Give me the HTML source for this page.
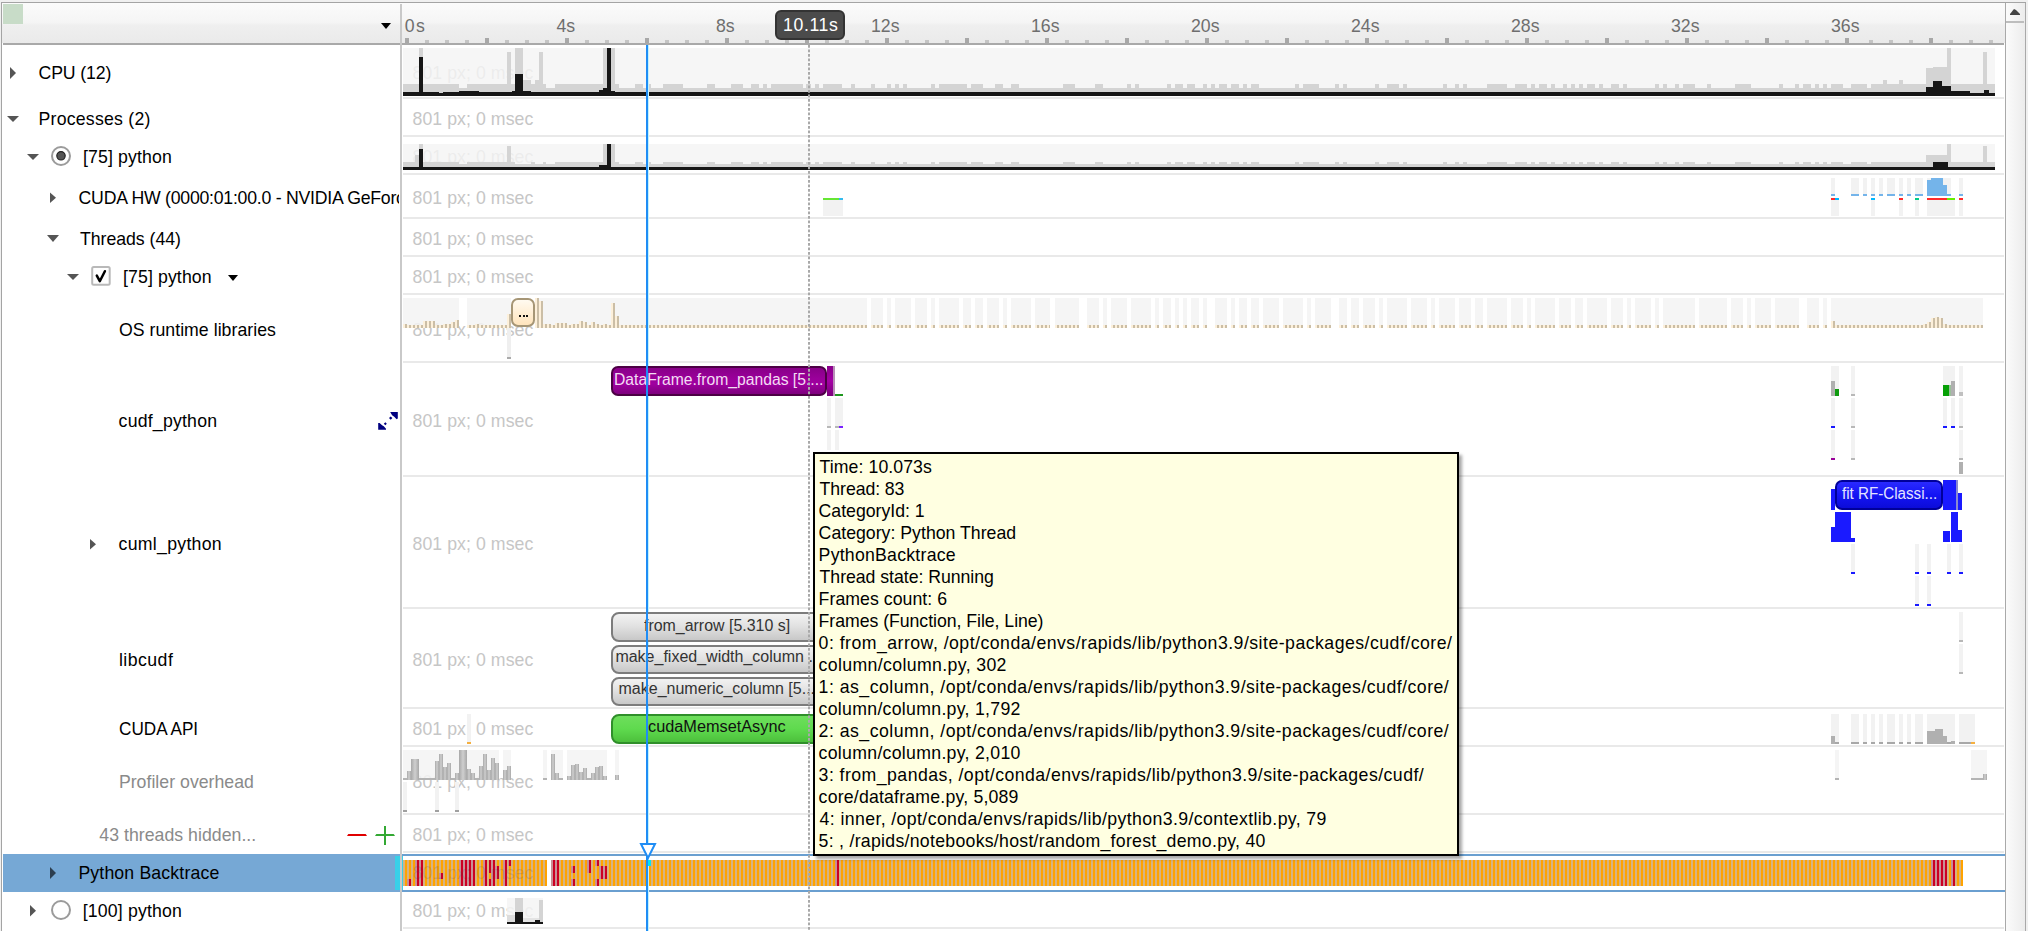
<!DOCTYPE html>
<html><head><meta charset="utf-8"><style>
html,body{margin:0;padding:0;width:2028px;height:931px;overflow:hidden;background:#f0f0f0}
#root{position:relative;width:2028px;height:931px;overflow:hidden;font-family:"Liberation Sans",sans-serif}
svg{position:absolute;left:0;top:0}
svg path,svg circle,svg line{shape-rendering:geometricPrecision}
.t{position:absolute;white-space:nowrap;line-height:normal;font-family:"Liberation Sans",sans-serif}
.center{transform:translateX(-50%)}
</style></head><body><div id="root">
<svg width="2028" height="931" viewBox="0 0 2028 931" shape-rendering="crispEdges">
<rect x="0" y="0" width="2028" height="931" fill="#f0f0f0" />
<rect x="1" y="2" width="2025" height="929" fill="#a4a4a4" />
<rect x="2" y="3" width="2023" height="928" fill="#ffffff" />
<defs><linearGradient id="hdr" x1="0" y1="0" x2="0" y2="1"><stop offset="0" stop-color="#fbfbfb"/><stop offset="0.48" stop-color="#f5f5f5"/><stop offset="0.56" stop-color="#efefef"/><stop offset="1" stop-color="#eaeaea"/></linearGradient><linearGradient id="sb" x1="0" y1="0" x2="1" y2="0"><stop offset="0" stop-color="#fbfbfb"/><stop offset="1" stop-color="#ececec"/></linearGradient></defs>
<rect x="2" y="3" width="2003" height="40" fill="url(#hdr)" />
<rect x="3" y="43" width="2001" height="2" fill="#a9a9a9" />
<rect x="3" y="4" width="20" height="20" fill="#c8dcc8" />
<path d="M381,23 L391,23 L386,29 Z" fill="#000"/>
<rect x="2005" y="3" width="1" height="928" fill="#a9a9a9" />
<rect x="2006" y="3" width="19" height="928" fill="url(#sb)" />
<rect x="2006" y="21" width="18" height="2" fill="#bdbdbd" />
<path d="M2010,15 L2020,15 L2020,14 L2016,10 L2014,9 L2010,14 Z" fill="#444"/>
<rect x="2025" y="3" width="1" height="928" fill="#a9a9a9" />
<rect x="405" y="38" width="4" height="5" fill="#a8a8a8" />
<rect x="425" y="40" width="4" height="3" fill="#c4c4c4" />
<rect x="445" y="40" width="4" height="3" fill="#c4c4c4" />
<rect x="465" y="40" width="4" height="3" fill="#c4c4c4" />
<rect x="485" y="38" width="4" height="5" fill="#a8a8a8" />
<rect x="505" y="40" width="4" height="3" fill="#c4c4c4" />
<rect x="525" y="40" width="4" height="3" fill="#c4c4c4" />
<rect x="545" y="40" width="4" height="3" fill="#c4c4c4" />
<rect x="565" y="38" width="4" height="5" fill="#a8a8a8" />
<rect x="585" y="40" width="4" height="3" fill="#c4c4c4" />
<rect x="605" y="40" width="4" height="3" fill="#c4c4c4" />
<rect x="625" y="40" width="4" height="3" fill="#c4c4c4" />
<rect x="645" y="38" width="4" height="5" fill="#a8a8a8" />
<rect x="665" y="40" width="4" height="3" fill="#c4c4c4" />
<rect x="685" y="40" width="4" height="3" fill="#c4c4c4" />
<rect x="705" y="40" width="4" height="3" fill="#c4c4c4" />
<rect x="725" y="38" width="4" height="5" fill="#a8a8a8" />
<rect x="745" y="40" width="4" height="3" fill="#c4c4c4" />
<rect x="765" y="40" width="4" height="3" fill="#c4c4c4" />
<rect x="785" y="40" width="4" height="3" fill="#c4c4c4" />
<rect x="805" y="38" width="4" height="5" fill="#a8a8a8" />
<rect x="825" y="40" width="4" height="3" fill="#c4c4c4" />
<rect x="845" y="40" width="4" height="3" fill="#c4c4c4" />
<rect x="865" y="40" width="4" height="3" fill="#c4c4c4" />
<rect x="885" y="38" width="4" height="5" fill="#a8a8a8" />
<rect x="905" y="40" width="4" height="3" fill="#c4c4c4" />
<rect x="925" y="40" width="4" height="3" fill="#c4c4c4" />
<rect x="945" y="40" width="4" height="3" fill="#c4c4c4" />
<rect x="965" y="38" width="4" height="5" fill="#a8a8a8" />
<rect x="985" y="40" width="4" height="3" fill="#c4c4c4" />
<rect x="1005" y="40" width="4" height="3" fill="#c4c4c4" />
<rect x="1025" y="40" width="4" height="3" fill="#c4c4c4" />
<rect x="1045" y="38" width="4" height="5" fill="#a8a8a8" />
<rect x="1065" y="40" width="4" height="3" fill="#c4c4c4" />
<rect x="1085" y="40" width="4" height="3" fill="#c4c4c4" />
<rect x="1105" y="40" width="4" height="3" fill="#c4c4c4" />
<rect x="1125" y="38" width="4" height="5" fill="#a8a8a8" />
<rect x="1145" y="40" width="4" height="3" fill="#c4c4c4" />
<rect x="1165" y="40" width="4" height="3" fill="#c4c4c4" />
<rect x="1185" y="40" width="4" height="3" fill="#c4c4c4" />
<rect x="1205" y="38" width="4" height="5" fill="#a8a8a8" />
<rect x="1225" y="40" width="4" height="3" fill="#c4c4c4" />
<rect x="1245" y="40" width="4" height="3" fill="#c4c4c4" />
<rect x="1265" y="40" width="4" height="3" fill="#c4c4c4" />
<rect x="1285" y="38" width="4" height="5" fill="#a8a8a8" />
<rect x="1305" y="40" width="4" height="3" fill="#c4c4c4" />
<rect x="1325" y="40" width="4" height="3" fill="#c4c4c4" />
<rect x="1345" y="40" width="4" height="3" fill="#c4c4c4" />
<rect x="1365" y="38" width="4" height="5" fill="#a8a8a8" />
<rect x="1385" y="40" width="4" height="3" fill="#c4c4c4" />
<rect x="1405" y="40" width="4" height="3" fill="#c4c4c4" />
<rect x="1425" y="40" width="4" height="3" fill="#c4c4c4" />
<rect x="1445" y="38" width="4" height="5" fill="#a8a8a8" />
<rect x="1465" y="40" width="4" height="3" fill="#c4c4c4" />
<rect x="1485" y="40" width="4" height="3" fill="#c4c4c4" />
<rect x="1505" y="40" width="4" height="3" fill="#c4c4c4" />
<rect x="1525" y="38" width="4" height="5" fill="#a8a8a8" />
<rect x="1545" y="40" width="4" height="3" fill="#c4c4c4" />
<rect x="1565" y="40" width="4" height="3" fill="#c4c4c4" />
<rect x="1585" y="40" width="4" height="3" fill="#c4c4c4" />
<rect x="1605" y="38" width="4" height="5" fill="#a8a8a8" />
<rect x="1625" y="40" width="4" height="3" fill="#c4c4c4" />
<rect x="1645" y="40" width="4" height="3" fill="#c4c4c4" />
<rect x="1665" y="40" width="4" height="3" fill="#c4c4c4" />
<rect x="1685" y="38" width="4" height="5" fill="#a8a8a8" />
<rect x="1705" y="40" width="4" height="3" fill="#c4c4c4" />
<rect x="1725" y="40" width="4" height="3" fill="#c4c4c4" />
<rect x="1745" y="40" width="4" height="3" fill="#c4c4c4" />
<rect x="1765" y="38" width="4" height="5" fill="#a8a8a8" />
<rect x="1785" y="40" width="4" height="3" fill="#c4c4c4" />
<rect x="1805" y="40" width="4" height="3" fill="#c4c4c4" />
<rect x="1825" y="40" width="4" height="3" fill="#c4c4c4" />
<rect x="1845" y="38" width="4" height="5" fill="#a8a8a8" />
<rect x="1869" y="40" width="4" height="3" fill="#c4c4c4" />
<rect x="1889" y="40" width="4" height="3" fill="#c4c4c4" />
<rect x="1909" y="40" width="4" height="3" fill="#c4c4c4" />
<rect x="1929" y="38" width="4" height="5" fill="#a8a8a8" />
<rect x="1949" y="40" width="4" height="3" fill="#c4c4c4" />
<rect x="1969" y="40" width="4" height="3" fill="#c4c4c4" />
<rect x="1989" y="40" width="4" height="3" fill="#c4c4c4" />
<rect x="400" y="4" width="2" height="927" fill="#c9c9c9" />
<rect x="403" y="97" width="1601" height="2" fill="#e9e9e9" />
<rect x="403" y="135" width="1601" height="2" fill="#e9e9e9" />
<rect x="403" y="173" width="1601" height="2" fill="#e9e9e9" />
<rect x="403" y="217" width="1601" height="2" fill="#e9e9e9" />
<rect x="403" y="255" width="1601" height="2" fill="#e9e9e9" />
<rect x="403" y="293" width="1601" height="2" fill="#e9e9e9" />
<rect x="403" y="361" width="1601" height="2" fill="#e9e9e9" />
<rect x="403" y="475" width="1601" height="2" fill="#e9e9e9" />
<rect x="403" y="607" width="1601" height="2" fill="#e9e9e9" />
<rect x="403" y="707" width="1601" height="2" fill="#e9e9e9" />
<rect x="403" y="745" width="1601" height="2" fill="#e9e9e9" />
<rect x="403" y="813" width="1601" height="2" fill="#e9e9e9" />
<rect x="403" y="851" width="1601" height="2" fill="#e9e9e9" />
<rect x="403" y="927" width="1601" height="2" fill="#e9e9e9" />
<path d="M10,67 L16,73.0 L10,79 Z" fill="#555"/>
<path d="M7,116 L19,116 L13.0,122 Z" fill="#555"/>
<path d="M27,154 L39,154 L33.0,160 Z" fill="#555"/>
<circle cx="61" cy="156" r="9" fill="#fff" stroke="#9b9b9b" stroke-width="2"/>
<circle cx="61" cy="155.8" r="4.2" fill="#555" stroke="#222" stroke-width="1.2"/>
<path d="M50,192.5 L56,197.75 L50,203 Z" fill="#555"/>
<path d="M47,235 L59,235 L53.0,242 Z" fill="#555"/>
<path d="M67,274 L79,274 L73.0,280 Z" fill="#555"/>
<rect x="92.2" y="267.1" width="17.5" height="17.7" rx="1.5" fill="#fff" stroke="#b9b9b9" stroke-width="2" shape-rendering="geometricPrecision"/>
<path d="M96.8,275.6 L99.8,281.2 L104.9,271.2" fill="none" stroke="#000" stroke-width="2.5" stroke-linecap="round" stroke-linejoin="round" shape-rendering="geometricPrecision"/>
<path d="M228,275 L238,275 L233.0,281 Z" fill="#000"/>
<g fill="#000080"><path d="M390.2,412 L397.8,412 L397.8,418.6 L396.6,419.2 L394.2,416.8 L392.1,415.3 Z"/><path d="M390.7,416.4 L392.4,418 L390.7,419.7 L389,418 Z"/><path d="M378.2,423 L379.6,422.9 L382.1,425.2 L383.8,426.3 L386,428.7 L386,429.7 L378.2,429.7 Z"/><path d="M385.3,422.3 L386.8,423.8 L385.3,425.3 L383.8,423.8 Z"/></g>
<path d="M90,539 L96,544.25 L90,549.5 Z" fill="#555"/>
<path d="M347,836 L348.3,834 L365.7,834 L367,836 Z" fill="#e00000"/>
<path d="M375,836 L376.3,834 L393.7,834 L395,836 Z" fill="#33a833"/>
<rect x="384" y="826" width="2" height="19" fill="#33a833" />
<rect x="3" y="854" width="397" height="38" fill="#76a8d5" />
<rect x="395" y="856" width="5" height="34" fill="#38d0e8" />
<path d="M50,867 L56,873.0 L50,879 Z" fill="#2c3e50"/>
<path d="M30,905 L36,910.75 L30,916.5 Z" fill="#555"/>
<circle cx="61" cy="910" r="9" fill="#fff" stroke="#9b9b9b" stroke-width="2"/>
<rect x="402" y="854" width="1603" height="2" fill="#6a9fd0" />
<rect x="402" y="890" width="1603" height="2" fill="#6a9fd0" />
<rect x="402" y="856" width="1" height="34" fill="#38d0e8" />
<defs><pattern id="stripe" x="1" y="0" width="4" height="40" patternUnits="userSpaceOnUse"><rect x="0" y="0" width="2" height="40" fill="#ffa300"/><rect x="2" y="0" width="2" height="40" fill="#d6b382"/></pattern><pattern id="rstripe" x="1" y="0" width="4" height="40" patternUnits="userSpaceOnUse"><rect x="0" y="0" width="2" height="40" fill="#cc0022"/><rect x="2" y="0" width="2" height="40" fill="#c89096"/></pattern></defs>
<rect x="403" y="860" width="144" height="26" fill="url(#stripe)" />
<rect x="551" y="860" width="1412" height="26" fill="url(#stripe)" />
<rect x="407" y="879" width="4" height="7" fill="url(#rstripe)" />
<rect x="415" y="860" width="8" height="26" fill="url(#rstripe)" />
<rect x="439" y="873" width="4" height="6" fill="url(#rstripe)" />
<rect x="459" y="860" width="16" height="26" fill="url(#rstripe)" />
<rect x="483" y="860" width="4" height="26" fill="url(#rstripe)" />
<rect x="489" y="860" width="6" height="13" fill="url(#rstripe)" />
<rect x="489" y="879" width="6" height="7" fill="url(#rstripe)" />
<rect x="491" y="866" width="8" height="13" fill="url(#rstripe)" />
<rect x="503" y="860" width="4" height="26" fill="url(#rstripe)" />
<rect x="508" y="860" width="3" height="6" fill="url(#rstripe)" />
<rect x="551" y="860" width="8" height="26" fill="url(#rstripe)" />
<rect x="571" y="866" width="4" height="7" fill="url(#rstripe)" />
<rect x="571" y="879" width="4" height="7" fill="url(#rstripe)" />
<rect x="587" y="860" width="4" height="13" fill="url(#rstripe)" />
<rect x="595" y="860" width="4" height="6" fill="url(#rstripe)" />
<rect x="595" y="879" width="4" height="7" fill="url(#rstripe)" />
<rect x="599" y="866" width="8" height="13" fill="url(#rstripe)" />
<rect x="835" y="860" width="4" height="26" fill="url(#rstripe)" />
<rect x="1931" y="860" width="16" height="26" fill="url(#rstripe)" />
<rect x="1951" y="860" width="4" height="26" fill="url(#rstripe)" />
</svg>
<div class="t" style="left:404.70px;top:16.00px;font-size:17.7px;color:#6e6e6e;letter-spacing:1.363px;">0s</div>
<div class="t" style="left:556.50px;top:16.00px;font-size:17.7px;color:#6e6e6e;letter-spacing:0.000px;">4s</div>
<div class="t" style="left:716.00px;top:16.00px;font-size:17.7px;color:#6e6e6e;letter-spacing:0.000px;">8s</div>
<div class="t" style="left:871.00px;top:16.00px;font-size:17.7px;color:#6e6e6e;letter-spacing:0.000px;">12s</div>
<div class="t" style="left:1031.00px;top:16.00px;font-size:17.7px;color:#6e6e6e;letter-spacing:0.000px;">16s</div>
<div class="t" style="left:1191.00px;top:16.00px;font-size:17.7px;color:#6e6e6e;letter-spacing:0.000px;">20s</div>
<div class="t" style="left:1351.00px;top:16.00px;font-size:17.7px;color:#6e6e6e;letter-spacing:0.000px;">24s</div>
<div class="t" style="left:1511.00px;top:16.00px;font-size:17.7px;color:#6e6e6e;letter-spacing:0.000px;">28s</div>
<div class="t" style="left:1671.00px;top:16.00px;font-size:17.7px;color:#6e6e6e;letter-spacing:0.000px;">32s</div>
<div class="t" style="left:1831.00px;top:16.00px;font-size:17.7px;color:#6e6e6e;letter-spacing:0.000px;">36s</div>
<div class="t" style="left:38.50px;top:62.60px;font-size:17.7px;color:#000;letter-spacing:-0.117px;">CPU (12)</div>
<div class="t" style="left:38.50px;top:108.60px;font-size:17.7px;color:#000;letter-spacing:0.232px;">Processes (2)</div>
<div class="t" style="left:83.00px;top:147.00px;font-size:17.7px;color:#000;letter-spacing:0.131px;">[75] python</div>
<div class="t" style="left:78.60px;top:187.70px;font-size:17.7px;color:#000;letter-spacing:-0.246px;clip-path:inset(-5px calc(100% - 320.4px) -5px -5px)">CUDA HW (0000:01:00.0 - NVIDIA GeForce RTX 3090)</div>
<div class="t" style="left:80.00px;top:229.00px;font-size:17.7px;color:#000;letter-spacing:-0.033px;">Threads (44)</div>
<div class="t" style="left:123.00px;top:266.70px;font-size:17.7px;color:#000;letter-spacing:0.111px;">[75] python</div>
<div class="t" style="left:119.00px;top:319.80px;font-size:17.7px;color:#000;letter-spacing:0.029px;">OS runtime libraries</div>
<div class="t" style="left:118.60px;top:410.60px;font-size:17.7px;color:#000;letter-spacing:0.206px;">cudf_python</div>
<div class="t" style="left:118.60px;top:533.90px;font-size:17.7px;color:#000;letter-spacing:0.275px;">cuml_python</div>
<div class="t" style="left:118.90px;top:649.80px;font-size:17.7px;color:#000;letter-spacing:0.464px;">libcudf</div>
<div class="t" style="left:118.90px;top:718.50px;font-size:17.7px;color:#000;letter-spacing:0.000px;transform:scaleX(0.9697);transform-origin:0 0;">CUDA API</div>
<div class="t" style="left:118.90px;top:771.80px;font-size:17.7px;color:#8a8a8a;letter-spacing:0.021px;">Profiler overhead</div>
<div class="t" style="left:99.30px;top:824.70px;font-size:17.7px;color:#8a8a8a;letter-spacing:0.029px;">43 threads hidden...</div>
<div class="t" style="left:78.40px;top:862.50px;font-size:17.7px;color:#000;letter-spacing:0.148px;">Python Backtrace</div>
<div class="t" style="left:82.80px;top:900.70px;font-size:17.7px;color:#000;letter-spacing:0.153px;">[100] python</div>
<div class="t" style="left:412.50px;top:62.80px;font-size:17.7px;color:#c6c6c6;letter-spacing:0.069px;">801 px; 0 msec</div>
<div class="t" style="left:412.50px;top:109.00px;font-size:17.7px;color:#c6c6c6;letter-spacing:0.069px;">801 px; 0 msec</div>
<div class="t" style="left:412.50px;top:147.00px;font-size:17.7px;color:#c6c6c6;letter-spacing:0.069px;">801 px; 0 msec</div>
<div class="t" style="left:412.50px;top:187.80px;font-size:17.7px;color:#c6c6c6;letter-spacing:0.069px;">801 px; 0 msec</div>
<div class="t" style="left:412.50px;top:229.00px;font-size:17.7px;color:#c6c6c6;letter-spacing:0.069px;">801 px; 0 msec</div>
<div class="t" style="left:412.50px;top:266.70px;font-size:17.7px;color:#c6c6c6;letter-spacing:0.069px;">801 px; 0 msec</div>
<div class="t" style="left:412.50px;top:320.00px;font-size:17.7px;color:#c6c6c6;letter-spacing:0.069px;">801 px; 0 msec</div>
<div class="t" style="left:412.50px;top:410.50px;font-size:17.7px;color:#c6c6c6;letter-spacing:0.069px;">801 px; 0 msec</div>
<div class="t" style="left:412.50px;top:533.90px;font-size:17.7px;color:#c6c6c6;letter-spacing:0.069px;">801 px; 0 msec</div>
<div class="t" style="left:412.50px;top:649.50px;font-size:17.7px;color:#c6c6c6;letter-spacing:0.069px;">801 px; 0 msec</div>
<div class="t" style="left:412.50px;top:718.60px;font-size:17.7px;color:#c6c6c6;letter-spacing:0.069px;">801 px; 0 msec</div>
<div class="t" style="left:412.50px;top:771.50px;font-size:17.7px;color:#c6c6c6;letter-spacing:0.069px;">801 px; 0 msec</div>
<div class="t" style="left:412.50px;top:824.70px;font-size:17.7px;color:#c6c6c6;letter-spacing:0.069px;">801 px; 0 msec</div>
<div class="t" style="left:412.50px;top:900.70px;font-size:17.7px;color:#c6c6c6;letter-spacing:0.069px;">801 px; 0 msec</div>
<svg width="2028" height="931" viewBox="0 0 2028 931" shape-rendering="crispEdges">
<rect x="403" y="48" width="1592" height="48" fill="#f4f4f4" fill-opacity="0.82"/>
<rect x="403" y="84" width="16" height="12" fill="#d4d4d4" />
<rect x="419" y="48" width="4" height="48" fill="#d4d4d4" />
<rect x="423" y="84" width="36" height="12" fill="#d4d4d4" />
<rect x="459" y="88" width="8" height="8" fill="#d4d4d4" />
<rect x="467" y="84" width="40" height="12" fill="#d4d4d4" />
<rect x="507" y="52" width="4" height="44" fill="#d4d4d4" />
<rect x="511" y="84" width="4" height="12" fill="#d4d4d4" />
<rect x="515" y="48" width="8" height="48" fill="#d4d4d4" />
<rect x="523" y="80" width="8" height="16" fill="#d4d4d4" />
<rect x="531" y="84" width="4" height="12" fill="#d4d4d4" />
<rect x="535" y="80" width="4" height="16" fill="#d4d4d4" />
<rect x="539" y="52" width="4" height="44" fill="#d4d4d4" />
<rect x="543" y="84" width="3" height="12" fill="#d4d4d4" />
<rect x="546" y="88" width="9" height="8" fill="#d4d4d4" />
<rect x="555" y="84" width="48" height="12" fill="#d4d4d4" />
<rect x="603" y="48" width="12" height="48" fill="#d4d4d4" />
<rect x="615" y="84" width="4" height="12" fill="#d4d4d4" />
<rect x="619" y="88" width="16" height="8" fill="#d4d4d4" />
<rect x="635" y="84" width="8" height="12" fill="#d4d4d4" />
<rect x="643" y="88" width="3" height="8" fill="#d4d4d4" />
<rect x="646" y="84" width="5" height="12" fill="#d4d4d4" />
<rect x="651" y="88" width="12" height="8" fill="#d4d4d4" />
<rect x="663" y="84" width="20" height="12" fill="#d4d4d4" />
<rect x="683" y="88" width="24" height="8" fill="#d4d4d4" />
<rect x="707" y="84" width="8" height="12" fill="#d4d4d4" />
<rect x="715" y="88" width="16" height="8" fill="#d4d4d4" />
<rect x="731" y="84" width="12" height="12" fill="#d4d4d4" />
<rect x="743" y="88" width="8" height="8" fill="#d4d4d4" />
<rect x="751" y="84" width="8" height="12" fill="#d4d4d4" />
<rect x="759" y="88" width="4" height="8" fill="#d4d4d4" />
<rect x="763" y="84" width="4" height="12" fill="#d4d4d4" />
<rect x="767" y="88" width="4" height="8" fill="#d4d4d4" />
<rect x="771" y="84" width="32" height="12" fill="#d4d4d4" />
<rect x="803" y="88" width="3" height="8" fill="#d4d4d4" />
<rect x="806" y="84" width="5" height="12" fill="#d4d4d4" />
<rect x="811" y="88" width="4" height="8" fill="#d4d4d4" />
<rect x="815" y="84" width="4" height="12" fill="#d4d4d4" />
<rect x="819" y="88" width="4" height="8" fill="#d4d4d4" />
<rect x="823" y="84" width="19" height="12" fill="#d4d4d4" />
<rect x="842" y="88" width="9" height="8" fill="#d4d4d4" />
<rect x="851" y="84" width="4" height="12" fill="#d4d4d4" />
<rect x="855" y="88" width="16" height="8" fill="#d4d4d4" />
<rect x="871" y="84" width="4" height="12" fill="#d4d4d4" />
<rect x="875" y="88" width="12" height="8" fill="#d4d4d4" />
<rect x="887" y="84" width="4" height="12" fill="#d4d4d4" />
<rect x="891" y="88" width="4" height="8" fill="#d4d4d4" />
<rect x="895" y="84" width="4" height="12" fill="#d4d4d4" />
<rect x="899" y="88" width="4" height="8" fill="#d4d4d4" />
<rect x="903" y="84" width="4" height="12" fill="#d4d4d4" />
<rect x="907" y="88" width="24" height="8" fill="#d4d4d4" />
<rect x="931" y="84" width="4" height="12" fill="#d4d4d4" />
<rect x="935" y="88" width="4" height="8" fill="#d4d4d4" />
<rect x="939" y="84" width="28" height="12" fill="#d4d4d4" />
<rect x="967" y="88" width="4" height="8" fill="#d4d4d4" />
<rect x="971" y="84" width="12" height="12" fill="#d4d4d4" />
<rect x="983" y="88" width="12" height="8" fill="#d4d4d4" />
<rect x="995" y="84" width="8" height="12" fill="#d4d4d4" />
<rect x="1003" y="88" width="8" height="8" fill="#d4d4d4" />
<rect x="1011" y="84" width="8" height="12" fill="#d4d4d4" />
<rect x="1019" y="88" width="44" height="8" fill="#d4d4d4" />
<rect x="1063" y="84" width="12" height="12" fill="#d4d4d4" />
<rect x="1075" y="88" width="20" height="8" fill="#d4d4d4" />
<rect x="1095" y="84" width="8" height="12" fill="#d4d4d4" />
<rect x="1103" y="88" width="24" height="8" fill="#d4d4d4" />
<rect x="1127" y="84" width="4" height="12" fill="#d4d4d4" />
<rect x="1131" y="88" width="4" height="8" fill="#d4d4d4" />
<rect x="1135" y="84" width="4" height="12" fill="#d4d4d4" />
<rect x="1139" y="88" width="28" height="8" fill="#d4d4d4" />
<rect x="1167" y="84" width="4" height="12" fill="#d4d4d4" />
<rect x="1171" y="88" width="4" height="8" fill="#d4d4d4" />
<rect x="1175" y="84" width="8" height="12" fill="#d4d4d4" />
<rect x="1183" y="88" width="4" height="8" fill="#d4d4d4" />
<rect x="1187" y="84" width="8" height="12" fill="#d4d4d4" />
<rect x="1195" y="88" width="8" height="8" fill="#d4d4d4" />
<rect x="1203" y="84" width="4" height="12" fill="#d4d4d4" />
<rect x="1207" y="88" width="4" height="8" fill="#d4d4d4" />
<rect x="1211" y="84" width="4" height="12" fill="#d4d4d4" />
<rect x="1215" y="88" width="4" height="8" fill="#d4d4d4" />
<rect x="1219" y="84" width="8" height="12" fill="#d4d4d4" />
<rect x="1227" y="88" width="4" height="8" fill="#d4d4d4" />
<rect x="1231" y="84" width="8" height="12" fill="#d4d4d4" />
<rect x="1239" y="88" width="4" height="8" fill="#d4d4d4" />
<rect x="1243" y="84" width="4" height="12" fill="#d4d4d4" />
<rect x="1247" y="88" width="4" height="8" fill="#d4d4d4" />
<rect x="1251" y="84" width="8" height="12" fill="#d4d4d4" />
<rect x="1259" y="88" width="36" height="8" fill="#d4d4d4" />
<rect x="1295" y="84" width="4" height="12" fill="#d4d4d4" />
<rect x="1299" y="88" width="4" height="8" fill="#d4d4d4" />
<rect x="1303" y="84" width="16" height="12" fill="#d4d4d4" />
<rect x="1319" y="88" width="16" height="8" fill="#d4d4d4" />
<rect x="1335" y="84" width="4" height="12" fill="#d4d4d4" />
<rect x="1339" y="88" width="4" height="8" fill="#d4d4d4" />
<rect x="1343" y="84" width="4" height="12" fill="#d4d4d4" />
<rect x="1347" y="88" width="28" height="8" fill="#d4d4d4" />
<rect x="1375" y="84" width="4" height="12" fill="#d4d4d4" />
<rect x="1379" y="88" width="8" height="8" fill="#d4d4d4" />
<rect x="1387" y="84" width="12" height="12" fill="#d4d4d4" />
<rect x="1399" y="88" width="4" height="8" fill="#d4d4d4" />
<rect x="1403" y="84" width="4" height="12" fill="#d4d4d4" />
<rect x="1407" y="88" width="36" height="8" fill="#d4d4d4" />
<rect x="1443" y="84" width="4" height="12" fill="#d4d4d4" />
<rect x="1447" y="88" width="8" height="8" fill="#d4d4d4" />
<rect x="1455" y="84" width="4" height="12" fill="#d4d4d4" />
<rect x="1459" y="88" width="4" height="8" fill="#d4d4d4" />
<rect x="1463" y="84" width="4" height="12" fill="#d4d4d4" />
<rect x="1467" y="88" width="20" height="8" fill="#d4d4d4" />
<rect x="1487" y="84" width="20" height="12" fill="#d4d4d4" />
<rect x="1507" y="88" width="8" height="8" fill="#d4d4d4" />
<rect x="1515" y="84" width="12" height="12" fill="#d4d4d4" />
<rect x="1527" y="88" width="4" height="8" fill="#d4d4d4" />
<rect x="1531" y="84" width="4" height="12" fill="#d4d4d4" />
<rect x="1535" y="88" width="4" height="8" fill="#d4d4d4" />
<rect x="1539" y="84" width="8" height="12" fill="#d4d4d4" />
<rect x="1547" y="88" width="4" height="8" fill="#d4d4d4" />
<rect x="1551" y="84" width="4" height="12" fill="#d4d4d4" />
<rect x="1555" y="88" width="8" height="8" fill="#d4d4d4" />
<rect x="1563" y="84" width="4" height="12" fill="#d4d4d4" />
<rect x="1567" y="88" width="4" height="8" fill="#d4d4d4" />
<rect x="1571" y="84" width="4" height="12" fill="#d4d4d4" />
<rect x="1575" y="88" width="4" height="8" fill="#d4d4d4" />
<rect x="1579" y="84" width="4" height="12" fill="#d4d4d4" />
<rect x="1583" y="88" width="4" height="8" fill="#d4d4d4" />
<rect x="1587" y="84" width="8" height="12" fill="#d4d4d4" />
<rect x="1595" y="88" width="4" height="8" fill="#d4d4d4" />
<rect x="1599" y="84" width="4" height="12" fill="#d4d4d4" />
<rect x="1603" y="88" width="8" height="8" fill="#d4d4d4" />
<rect x="1611" y="84" width="8" height="12" fill="#d4d4d4" />
<rect x="1619" y="88" width="4" height="8" fill="#d4d4d4" />
<rect x="1623" y="84" width="4" height="12" fill="#d4d4d4" />
<rect x="1627" y="88" width="28" height="8" fill="#d4d4d4" />
<rect x="1655" y="84" width="4" height="12" fill="#d4d4d4" />
<rect x="1659" y="88" width="4" height="8" fill="#d4d4d4" />
<rect x="1663" y="84" width="4" height="12" fill="#d4d4d4" />
<rect x="1667" y="88" width="8" height="8" fill="#d4d4d4" />
<rect x="1675" y="84" width="4" height="12" fill="#d4d4d4" />
<rect x="1679" y="88" width="4" height="8" fill="#d4d4d4" />
<rect x="1683" y="84" width="12" height="12" fill="#d4d4d4" />
<rect x="1695" y="88" width="12" height="8" fill="#d4d4d4" />
<rect x="1707" y="84" width="4" height="12" fill="#d4d4d4" />
<rect x="1711" y="88" width="24" height="8" fill="#d4d4d4" />
<rect x="1735" y="84" width="16" height="12" fill="#d4d4d4" />
<rect x="1751" y="88" width="28" height="8" fill="#d4d4d4" />
<rect x="1779" y="84" width="4" height="12" fill="#d4d4d4" />
<rect x="1783" y="88" width="12" height="8" fill="#d4d4d4" />
<rect x="1795" y="84" width="4" height="12" fill="#d4d4d4" />
<rect x="1799" y="88" width="4" height="8" fill="#d4d4d4" />
<rect x="1803" y="84" width="8" height="12" fill="#d4d4d4" />
<rect x="1811" y="88" width="4" height="8" fill="#d4d4d4" />
<rect x="1815" y="84" width="4" height="12" fill="#d4d4d4" />
<rect x="1819" y="88" width="4" height="8" fill="#d4d4d4" />
<rect x="1823" y="84" width="4" height="12" fill="#d4d4d4" />
<rect x="1827" y="88" width="4" height="8" fill="#d4d4d4" />
<rect x="1831" y="84" width="12" height="12" fill="#d4d4d4" />
<rect x="1843" y="88" width="8" height="8" fill="#d4d4d4" />
<rect x="1851" y="84" width="16" height="12" fill="#d4d4d4" />
<rect x="1867" y="88" width="4" height="8" fill="#d4d4d4" />
<rect x="1871" y="84" width="12" height="12" fill="#d4d4d4" />
<rect x="1883" y="80" width="4" height="16" fill="#d4d4d4" />
<rect x="1887" y="84" width="12" height="12" fill="#d4d4d4" />
<rect x="1899" y="80" width="4" height="16" fill="#d4d4d4" />
<rect x="1903" y="84" width="23" height="12" fill="#d4d4d4" />
<rect x="1926" y="68" width="7" height="28" fill="#d4d4d4" />
<rect x="1933" y="67" width="14" height="29" fill="#d4d4d4" />
<rect x="1947" y="48" width="4" height="48" fill="#d4d4d4" />
<rect x="1951" y="84" width="32" height="12" fill="#d4d4d4" />
<rect x="1983" y="52" width="4" height="44" fill="#d4d4d4" />
<rect x="1987" y="84" width="8" height="12" fill="#d4d4d4" />
<rect x="403" y="92" width="16" height="4" fill="#161616" />
<rect x="419" y="57" width="4" height="39" fill="#161616" />
<rect x="423" y="92" width="16" height="4" fill="#161616" />
<rect x="439" y="93" width="4" height="3" fill="#161616" />
<rect x="443" y="92" width="16" height="4" fill="#161616" />
<rect x="459" y="91" width="20" height="5" fill="#161616" />
<rect x="479" y="92" width="33" height="4" fill="#161616" />
<rect x="512" y="91" width="3" height="5" fill="#161616" />
<rect x="515" y="74" width="8" height="22" fill="#161616" />
<rect x="523" y="91" width="8" height="5" fill="#161616" />
<rect x="531" y="92" width="68" height="4" fill="#161616" />
<rect x="599" y="90" width="4" height="6" fill="#161616" />
<rect x="603" y="88" width="4" height="8" fill="#161616" />
<rect x="607" y="48" width="4" height="48" fill="#161616" />
<rect x="611" y="91" width="4" height="5" fill="#161616" />
<rect x="615" y="92" width="1311" height="4" fill="#161616" />
<rect x="1926" y="87" width="7" height="9" fill="#161616" />
<rect x="1933" y="81" width="9" height="15" fill="#161616" />
<rect x="1942" y="86" width="9" height="10" fill="#161616" />
<rect x="1951" y="91" width="19" height="5" fill="#161616" />
<rect x="1970" y="93" width="14" height="3" fill="#161616" />
<rect x="1984" y="90" width="5" height="6" fill="#161616" />
<rect x="1989" y="93" width="6" height="3" fill="#161616" />
<rect x="403" y="144" width="1592" height="26" fill="#f4f4f4" fill-opacity="0.82"/>
<rect x="403" y="162" width="12" height="8" fill="#d4d4d4" />
<rect x="415" y="155" width="4" height="15" fill="#d4d4d4" />
<rect x="419" y="144" width="4" height="26" fill="#d4d4d4" />
<rect x="423" y="162" width="36" height="8" fill="#d4d4d4" />
<rect x="459" y="164" width="8" height="6" fill="#d4d4d4" />
<rect x="467" y="162" width="40" height="8" fill="#d4d4d4" />
<rect x="507" y="146" width="4" height="24" fill="#d4d4d4" />
<rect x="511" y="162" width="4" height="8" fill="#d4d4d4" />
<rect x="515" y="164" width="16" height="6" fill="#d4d4d4" />
<rect x="531" y="162" width="4" height="8" fill="#d4d4d4" />
<rect x="535" y="164" width="8" height="6" fill="#d4d4d4" />
<rect x="543" y="162" width="3" height="8" fill="#d4d4d4" />
<rect x="546" y="164" width="9" height="6" fill="#d4d4d4" />
<rect x="555" y="162" width="48" height="8" fill="#d4d4d4" />
<rect x="603" y="144" width="12" height="26" fill="#d4d4d4" />
<rect x="615" y="162" width="4" height="8" fill="#d4d4d4" />
<rect x="619" y="164" width="16" height="6" fill="#d4d4d4" />
<rect x="635" y="162" width="8" height="8" fill="#d4d4d4" />
<rect x="643" y="164" width="3" height="6" fill="#d4d4d4" />
<rect x="646" y="162" width="5" height="8" fill="#d4d4d4" />
<rect x="651" y="164" width="12" height="6" fill="#d4d4d4" />
<rect x="663" y="162" width="20" height="8" fill="#d4d4d4" />
<rect x="683" y="164" width="24" height="6" fill="#d4d4d4" />
<rect x="707" y="162" width="8" height="8" fill="#d4d4d4" />
<rect x="715" y="164" width="16" height="6" fill="#d4d4d4" />
<rect x="731" y="162" width="12" height="8" fill="#d4d4d4" />
<rect x="743" y="164" width="8" height="6" fill="#d4d4d4" />
<rect x="751" y="162" width="8" height="8" fill="#d4d4d4" />
<rect x="759" y="164" width="4" height="6" fill="#d4d4d4" />
<rect x="763" y="162" width="4" height="8" fill="#d4d4d4" />
<rect x="767" y="164" width="4" height="6" fill="#d4d4d4" />
<rect x="771" y="162" width="32" height="8" fill="#d4d4d4" />
<rect x="803" y="164" width="3" height="6" fill="#d4d4d4" />
<rect x="806" y="162" width="5" height="8" fill="#d4d4d4" />
<rect x="811" y="164" width="4" height="6" fill="#d4d4d4" />
<rect x="815" y="162" width="4" height="8" fill="#d4d4d4" />
<rect x="819" y="164" width="4" height="6" fill="#d4d4d4" />
<rect x="823" y="162" width="19" height="8" fill="#d4d4d4" />
<rect x="842" y="164" width="9" height="6" fill="#d4d4d4" />
<rect x="851" y="162" width="4" height="8" fill="#d4d4d4" />
<rect x="855" y="164" width="16" height="6" fill="#d4d4d4" />
<rect x="871" y="162" width="4" height="8" fill="#d4d4d4" />
<rect x="875" y="164" width="12" height="6" fill="#d4d4d4" />
<rect x="887" y="162" width="4" height="8" fill="#d4d4d4" />
<rect x="891" y="164" width="4" height="6" fill="#d4d4d4" />
<rect x="895" y="162" width="4" height="8" fill="#d4d4d4" />
<rect x="899" y="164" width="4" height="6" fill="#d4d4d4" />
<rect x="903" y="162" width="4" height="8" fill="#d4d4d4" />
<rect x="907" y="164" width="24" height="6" fill="#d4d4d4" />
<rect x="931" y="162" width="4" height="8" fill="#d4d4d4" />
<rect x="935" y="164" width="4" height="6" fill="#d4d4d4" />
<rect x="939" y="162" width="28" height="8" fill="#d4d4d4" />
<rect x="967" y="164" width="4" height="6" fill="#d4d4d4" />
<rect x="971" y="162" width="12" height="8" fill="#d4d4d4" />
<rect x="983" y="164" width="12" height="6" fill="#d4d4d4" />
<rect x="995" y="162" width="8" height="8" fill="#d4d4d4" />
<rect x="1003" y="164" width="8" height="6" fill="#d4d4d4" />
<rect x="1011" y="162" width="8" height="8" fill="#d4d4d4" />
<rect x="1019" y="164" width="44" height="6" fill="#d4d4d4" />
<rect x="1063" y="162" width="12" height="8" fill="#d4d4d4" />
<rect x="1075" y="164" width="20" height="6" fill="#d4d4d4" />
<rect x="1095" y="162" width="8" height="8" fill="#d4d4d4" />
<rect x="1103" y="164" width="24" height="6" fill="#d4d4d4" />
<rect x="1127" y="162" width="4" height="8" fill="#d4d4d4" />
<rect x="1131" y="164" width="4" height="6" fill="#d4d4d4" />
<rect x="1135" y="162" width="4" height="8" fill="#d4d4d4" />
<rect x="1139" y="164" width="28" height="6" fill="#d4d4d4" />
<rect x="1167" y="162" width="4" height="8" fill="#d4d4d4" />
<rect x="1171" y="164" width="4" height="6" fill="#d4d4d4" />
<rect x="1175" y="162" width="8" height="8" fill="#d4d4d4" />
<rect x="1183" y="164" width="4" height="6" fill="#d4d4d4" />
<rect x="1187" y="162" width="8" height="8" fill="#d4d4d4" />
<rect x="1195" y="164" width="8" height="6" fill="#d4d4d4" />
<rect x="1203" y="162" width="4" height="8" fill="#d4d4d4" />
<rect x="1207" y="164" width="4" height="6" fill="#d4d4d4" />
<rect x="1211" y="162" width="4" height="8" fill="#d4d4d4" />
<rect x="1215" y="164" width="4" height="6" fill="#d4d4d4" />
<rect x="1219" y="162" width="8" height="8" fill="#d4d4d4" />
<rect x="1227" y="164" width="4" height="6" fill="#d4d4d4" />
<rect x="1231" y="162" width="8" height="8" fill="#d4d4d4" />
<rect x="1239" y="164" width="4" height="6" fill="#d4d4d4" />
<rect x="1243" y="162" width="4" height="8" fill="#d4d4d4" />
<rect x="1247" y="164" width="4" height="6" fill="#d4d4d4" />
<rect x="1251" y="162" width="8" height="8" fill="#d4d4d4" />
<rect x="1259" y="164" width="36" height="6" fill="#d4d4d4" />
<rect x="1295" y="162" width="4" height="8" fill="#d4d4d4" />
<rect x="1299" y="164" width="4" height="6" fill="#d4d4d4" />
<rect x="1303" y="162" width="16" height="8" fill="#d4d4d4" />
<rect x="1319" y="164" width="16" height="6" fill="#d4d4d4" />
<rect x="1335" y="162" width="4" height="8" fill="#d4d4d4" />
<rect x="1339" y="164" width="4" height="6" fill="#d4d4d4" />
<rect x="1343" y="162" width="4" height="8" fill="#d4d4d4" />
<rect x="1347" y="164" width="28" height="6" fill="#d4d4d4" />
<rect x="1375" y="162" width="4" height="8" fill="#d4d4d4" />
<rect x="1379" y="164" width="8" height="6" fill="#d4d4d4" />
<rect x="1387" y="162" width="12" height="8" fill="#d4d4d4" />
<rect x="1399" y="164" width="4" height="6" fill="#d4d4d4" />
<rect x="1403" y="162" width="4" height="8" fill="#d4d4d4" />
<rect x="1407" y="164" width="36" height="6" fill="#d4d4d4" />
<rect x="1443" y="162" width="4" height="8" fill="#d4d4d4" />
<rect x="1447" y="164" width="8" height="6" fill="#d4d4d4" />
<rect x="1455" y="162" width="4" height="8" fill="#d4d4d4" />
<rect x="1459" y="164" width="4" height="6" fill="#d4d4d4" />
<rect x="1463" y="162" width="4" height="8" fill="#d4d4d4" />
<rect x="1467" y="164" width="20" height="6" fill="#d4d4d4" />
<rect x="1487" y="162" width="20" height="8" fill="#d4d4d4" />
<rect x="1507" y="164" width="8" height="6" fill="#d4d4d4" />
<rect x="1515" y="162" width="12" height="8" fill="#d4d4d4" />
<rect x="1527" y="164" width="4" height="6" fill="#d4d4d4" />
<rect x="1531" y="162" width="4" height="8" fill="#d4d4d4" />
<rect x="1535" y="164" width="4" height="6" fill="#d4d4d4" />
<rect x="1539" y="162" width="8" height="8" fill="#d4d4d4" />
<rect x="1547" y="164" width="4" height="6" fill="#d4d4d4" />
<rect x="1551" y="162" width="4" height="8" fill="#d4d4d4" />
<rect x="1555" y="164" width="8" height="6" fill="#d4d4d4" />
<rect x="1563" y="162" width="4" height="8" fill="#d4d4d4" />
<rect x="1567" y="164" width="4" height="6" fill="#d4d4d4" />
<rect x="1571" y="162" width="4" height="8" fill="#d4d4d4" />
<rect x="1575" y="164" width="4" height="6" fill="#d4d4d4" />
<rect x="1579" y="162" width="4" height="8" fill="#d4d4d4" />
<rect x="1583" y="164" width="4" height="6" fill="#d4d4d4" />
<rect x="1587" y="162" width="8" height="8" fill="#d4d4d4" />
<rect x="1595" y="164" width="4" height="6" fill="#d4d4d4" />
<rect x="1599" y="162" width="4" height="8" fill="#d4d4d4" />
<rect x="1603" y="164" width="8" height="6" fill="#d4d4d4" />
<rect x="1611" y="162" width="8" height="8" fill="#d4d4d4" />
<rect x="1619" y="164" width="4" height="6" fill="#d4d4d4" />
<rect x="1623" y="162" width="4" height="8" fill="#d4d4d4" />
<rect x="1627" y="164" width="28" height="6" fill="#d4d4d4" />
<rect x="1655" y="162" width="4" height="8" fill="#d4d4d4" />
<rect x="1659" y="164" width="4" height="6" fill="#d4d4d4" />
<rect x="1663" y="162" width="4" height="8" fill="#d4d4d4" />
<rect x="1667" y="164" width="8" height="6" fill="#d4d4d4" />
<rect x="1675" y="162" width="4" height="8" fill="#d4d4d4" />
<rect x="1679" y="164" width="4" height="6" fill="#d4d4d4" />
<rect x="1683" y="162" width="12" height="8" fill="#d4d4d4" />
<rect x="1695" y="164" width="12" height="6" fill="#d4d4d4" />
<rect x="1707" y="162" width="4" height="8" fill="#d4d4d4" />
<rect x="1711" y="164" width="24" height="6" fill="#d4d4d4" />
<rect x="1735" y="162" width="16" height="8" fill="#d4d4d4" />
<rect x="1751" y="164" width="28" height="6" fill="#d4d4d4" />
<rect x="1779" y="162" width="4" height="8" fill="#d4d4d4" />
<rect x="1783" y="164" width="12" height="6" fill="#d4d4d4" />
<rect x="1795" y="162" width="4" height="8" fill="#d4d4d4" />
<rect x="1799" y="164" width="4" height="6" fill="#d4d4d4" />
<rect x="1803" y="162" width="8" height="8" fill="#d4d4d4" />
<rect x="1811" y="164" width="4" height="6" fill="#d4d4d4" />
<rect x="1815" y="162" width="4" height="8" fill="#d4d4d4" />
<rect x="1819" y="164" width="4" height="6" fill="#d4d4d4" />
<rect x="1823" y="162" width="4" height="8" fill="#d4d4d4" />
<rect x="1827" y="164" width="4" height="6" fill="#d4d4d4" />
<rect x="1831" y="162" width="12" height="8" fill="#d4d4d4" />
<rect x="1843" y="164" width="8" height="6" fill="#d4d4d4" />
<rect x="1851" y="162" width="16" height="8" fill="#d4d4d4" />
<rect x="1867" y="164" width="4" height="6" fill="#d4d4d4" />
<rect x="1871" y="162" width="55" height="8" fill="#d4d4d4" />
<rect x="1926" y="155" width="21" height="15" fill="#d4d4d4" />
<rect x="1947" y="144" width="4" height="26" fill="#d4d4d4" />
<rect x="1951" y="162" width="32" height="8" fill="#d4d4d4" />
<rect x="1983" y="146" width="4" height="24" fill="#d4d4d4" />
<rect x="1987" y="162" width="8" height="8" fill="#d4d4d4" />
<rect x="403" y="167" width="16" height="3" fill="#161616" />
<rect x="419" y="149" width="4" height="21" fill="#161616" />
<rect x="423" y="167" width="176" height="3" fill="#161616" />
<rect x="599" y="165" width="8" height="5" fill="#161616" />
<rect x="607" y="144" width="4" height="26" fill="#161616" />
<rect x="611" y="167" width="1322" height="3" fill="#161616" />
<rect x="1933" y="162" width="15" height="8" fill="#161616" />
<rect x="1948" y="167" width="47" height="3" fill="#161616" />
<rect x="507" y="898" width="36" height="26" fill="#f4f4f4" fill-opacity="0.85"/>
<rect x="507" y="915" width="8" height="9" fill="#dcdcdc" />
<rect x="515" y="898" width="8" height="26" fill="#d4d4d4" />
<rect x="539" y="900" width="4" height="24" fill="#d4d4d4" />
<rect x="523" y="918" width="16" height="6" fill="#e4e4e4" />
<rect x="515" y="912" width="8" height="12" fill="#161616" />
<rect x="507" y="922" width="36" height="2" fill="#161616" />
<rect x="535" y="920" width="5" height="4" fill="#161616" />
<rect x="403" y="298" width="56" height="27" fill="#f3f3f3" fill-opacity="0.85"/>
<rect x="403" y="324" width="2" height="4" fill="#fdf0da" />
<rect x="405" y="324" width="2" height="4" fill="#cbbea6" />
<rect x="407" y="325" width="2" height="3" fill="#fdf0da" />
<rect x="409" y="325" width="2" height="3" fill="#cbbea6" />
<rect x="411" y="325" width="2" height="3" fill="#fdf0da" />
<rect x="413" y="325" width="2" height="3" fill="#cbbea6" />
<rect x="415" y="325" width="2" height="3" fill="#fdf0da" />
<rect x="417" y="325" width="2" height="3" fill="#cbbea6" />
<rect x="419" y="325" width="2" height="3" fill="#fdf0da" />
<rect x="421" y="325" width="2" height="3" fill="#cbbea6" />
<rect x="423" y="321" width="2" height="7" fill="#fdf0da" />
<rect x="425" y="321" width="2" height="7" fill="#cbbea6" />
<rect x="427" y="321" width="2" height="7" fill="#fdf0da" />
<rect x="429" y="321" width="2" height="7" fill="#cbbea6" />
<rect x="431" y="321" width="2" height="7" fill="#fdf0da" />
<rect x="433" y="321" width="2" height="7" fill="#cbbea6" />
<rect x="435" y="325" width="2" height="3" fill="#fdf0da" />
<rect x="437" y="325" width="2" height="3" fill="#cbbea6" />
<rect x="439" y="325" width="2" height="3" fill="#fdf0da" />
<rect x="441" y="325" width="2" height="3" fill="#cbbea6" />
<rect x="443" y="324" width="2" height="4" fill="#fdf0da" />
<rect x="445" y="324" width="2" height="4" fill="#cbbea6" />
<rect x="447" y="324" width="2" height="4" fill="#fdf0da" />
<rect x="449" y="324" width="2" height="4" fill="#cbbea6" />
<rect x="451" y="322" width="2" height="6" fill="#fdf0da" />
<rect x="453" y="322" width="2" height="6" fill="#cbbea6" />
<rect x="455" y="320" width="2" height="8" fill="#fdf0da" />
<rect x="457" y="320" width="2" height="8" fill="#cbbea6" />
<rect x="467" y="298" width="44" height="27" fill="#f3f3f3" fill-opacity="0.85"/>
<rect x="467" y="325" width="2" height="3" fill="#fdf0da" />
<rect x="469" y="325" width="2" height="3" fill="#cbbea6" />
<rect x="471" y="325" width="2" height="3" fill="#fdf0da" />
<rect x="473" y="325" width="2" height="3" fill="#cbbea6" />
<rect x="475" y="324" width="2" height="4" fill="#fdf0da" />
<rect x="477" y="324" width="2" height="4" fill="#cbbea6" />
<rect x="479" y="325" width="2" height="3" fill="#fdf0da" />
<rect x="481" y="325" width="2" height="3" fill="#cbbea6" />
<rect x="483" y="325" width="2" height="3" fill="#fdf0da" />
<rect x="485" y="325" width="2" height="3" fill="#cbbea6" />
<rect x="487" y="325" width="2" height="3" fill="#fdf0da" />
<rect x="489" y="325" width="2" height="3" fill="#cbbea6" />
<rect x="491" y="325" width="2" height="3" fill="#fdf0da" />
<rect x="493" y="325" width="2" height="3" fill="#cbbea6" />
<rect x="495" y="325" width="2" height="3" fill="#fdf0da" />
<rect x="497" y="325" width="2" height="3" fill="#cbbea6" />
<rect x="499" y="325" width="2" height="3" fill="#fdf0da" />
<rect x="501" y="325" width="2" height="3" fill="#cbbea6" />
<rect x="503" y="325" width="2" height="3" fill="#fdf0da" />
<rect x="505" y="325" width="2" height="3" fill="#cbbea6" />
<rect x="507" y="314" width="2" height="14" fill="#fdf0da" />
<rect x="509" y="314" width="2" height="14" fill="#cbbea6" />
<rect x="535" y="298" width="332" height="27" fill="#f3f3f3" fill-opacity="0.85"/>
<rect x="535" y="298" width="2" height="30" fill="#fdf0da" />
<rect x="537" y="298" width="2" height="30" fill="#cbbea6" />
<rect x="539" y="301" width="2" height="27" fill="#fdf0da" />
<rect x="541" y="301" width="2" height="27" fill="#cbbea6" />
<rect x="543" y="324" width="2" height="4" fill="#fdf0da" />
<rect x="545" y="324" width="2" height="4" fill="#cbbea6" />
<rect x="547" y="324" width="2" height="4" fill="#fdf0da" />
<rect x="549" y="324" width="2" height="4" fill="#cbbea6" />
<rect x="551" y="325" width="2" height="3" fill="#fdf0da" />
<rect x="553" y="325" width="2" height="3" fill="#cbbea6" />
<rect x="555" y="323" width="2" height="5" fill="#fdf0da" />
<rect x="557" y="323" width="2" height="5" fill="#cbbea6" />
<rect x="559" y="323" width="2" height="5" fill="#fdf0da" />
<rect x="561" y="323" width="2" height="5" fill="#cbbea6" />
<rect x="563" y="323" width="2" height="5" fill="#fdf0da" />
<rect x="565" y="323" width="2" height="5" fill="#cbbea6" />
<rect x="567" y="325" width="2" height="3" fill="#fdf0da" />
<rect x="569" y="325" width="2" height="3" fill="#cbbea6" />
<rect x="571" y="324" width="2" height="4" fill="#fdf0da" />
<rect x="573" y="324" width="2" height="4" fill="#cbbea6" />
<rect x="575" y="324" width="2" height="4" fill="#fdf0da" />
<rect x="577" y="324" width="2" height="4" fill="#cbbea6" />
<rect x="579" y="320.5" width="2" height="7.5" fill="#fdf0da" />
<rect x="581" y="320.5" width="2" height="7.5" fill="#cbbea6" />
<rect x="583" y="321.5" width="2" height="6.5" fill="#fdf0da" />
<rect x="585" y="321.5" width="2" height="6.5" fill="#cbbea6" />
<rect x="587" y="325" width="2" height="3" fill="#fdf0da" />
<rect x="589" y="325" width="2" height="3" fill="#cbbea6" />
<rect x="591" y="321.5" width="2" height="6.5" fill="#fdf0da" />
<rect x="593" y="321.5" width="2" height="6.5" fill="#cbbea6" />
<rect x="595" y="323.5" width="2" height="4.5" fill="#fdf0da" />
<rect x="597" y="323.5" width="2" height="4.5" fill="#cbbea6" />
<rect x="599" y="325" width="2" height="3" fill="#fdf0da" />
<rect x="601" y="325" width="2" height="3" fill="#cbbea6" />
<rect x="603" y="324" width="2" height="4" fill="#fdf0da" />
<rect x="605" y="324" width="2" height="4" fill="#cbbea6" />
<rect x="607" y="325" width="2" height="3" fill="#fdf0da" />
<rect x="609" y="325" width="2" height="3" fill="#cbbea6" />
<rect x="611" y="303" width="2" height="25" fill="#fdf0da" />
<rect x="613" y="303" width="2" height="25" fill="#cbbea6" />
<rect x="615" y="316" width="2" height="12" fill="#fdf0da" />
<rect x="617" y="316" width="2" height="12" fill="#cbbea6" />
<rect x="619" y="325" width="2" height="3" fill="#fdf0da" />
<rect x="621" y="325" width="2" height="3" fill="#cbbea6" />
<rect x="623" y="325" width="2" height="3" fill="#fdf0da" />
<rect x="625" y="325" width="2" height="3" fill="#cbbea6" />
<rect x="627" y="325" width="2" height="3" fill="#fdf0da" />
<rect x="629" y="325" width="2" height="3" fill="#cbbea6" />
<rect x="631" y="325" width="2" height="3" fill="#fdf0da" />
<rect x="633" y="325" width="2" height="3" fill="#cbbea6" />
<rect x="635" y="325" width="2" height="3" fill="#fdf0da" />
<rect x="637" y="325" width="2" height="3" fill="#cbbea6" />
<rect x="639" y="325" width="2" height="3" fill="#fdf0da" />
<rect x="641" y="325" width="2" height="3" fill="#cbbea6" />
<rect x="643" y="325" width="2" height="3" fill="#fdf0da" />
<rect x="645" y="325" width="2" height="3" fill="#cbbea6" />
<rect x="647" y="325" width="2" height="3" fill="#fdf0da" />
<rect x="649" y="325" width="2" height="3" fill="#cbbea6" />
<rect x="651" y="325" width="2" height="3" fill="#fdf0da" />
<rect x="653" y="325" width="2" height="3" fill="#cbbea6" />
<rect x="655" y="325" width="2" height="3" fill="#fdf0da" />
<rect x="657" y="325" width="2" height="3" fill="#cbbea6" />
<rect x="659" y="325" width="2" height="3" fill="#fdf0da" />
<rect x="661" y="325" width="2" height="3" fill="#cbbea6" />
<rect x="663" y="325" width="2" height="3" fill="#fdf0da" />
<rect x="665" y="325" width="2" height="3" fill="#cbbea6" />
<rect x="667" y="325" width="2" height="3" fill="#fdf0da" />
<rect x="669" y="325" width="2" height="3" fill="#cbbea6" />
<rect x="671" y="325" width="2" height="3" fill="#fdf0da" />
<rect x="673" y="325" width="2" height="3" fill="#cbbea6" />
<rect x="675" y="325" width="2" height="3" fill="#fdf0da" />
<rect x="677" y="325" width="2" height="3" fill="#cbbea6" />
<rect x="679" y="325" width="2" height="3" fill="#fdf0da" />
<rect x="681" y="325" width="2" height="3" fill="#cbbea6" />
<rect x="683" y="325" width="2" height="3" fill="#fdf0da" />
<rect x="685" y="325" width="2" height="3" fill="#cbbea6" />
<rect x="687" y="325" width="2" height="3" fill="#fdf0da" />
<rect x="689" y="325" width="2" height="3" fill="#cbbea6" />
<rect x="691" y="325" width="2" height="3" fill="#fdf0da" />
<rect x="693" y="325" width="2" height="3" fill="#cbbea6" />
<rect x="695" y="325" width="2" height="3" fill="#fdf0da" />
<rect x="697" y="325" width="2" height="3" fill="#cbbea6" />
<rect x="699" y="325" width="2" height="3" fill="#fdf0da" />
<rect x="701" y="325" width="2" height="3" fill="#cbbea6" />
<rect x="703" y="325" width="2" height="3" fill="#fdf0da" />
<rect x="705" y="325" width="2" height="3" fill="#cbbea6" />
<rect x="707" y="325" width="2" height="3" fill="#fdf0da" />
<rect x="709" y="325" width="2" height="3" fill="#cbbea6" />
<rect x="711" y="325" width="2" height="3" fill="#fdf0da" />
<rect x="713" y="325" width="2" height="3" fill="#cbbea6" />
<rect x="715" y="325" width="2" height="3" fill="#fdf0da" />
<rect x="717" y="325" width="2" height="3" fill="#cbbea6" />
<rect x="719" y="325" width="2" height="3" fill="#fdf0da" />
<rect x="721" y="325" width="2" height="3" fill="#cbbea6" />
<rect x="723" y="325" width="2" height="3" fill="#fdf0da" />
<rect x="725" y="325" width="2" height="3" fill="#cbbea6" />
<rect x="727" y="325" width="2" height="3" fill="#fdf0da" />
<rect x="729" y="325" width="2" height="3" fill="#cbbea6" />
<rect x="731" y="325" width="2" height="3" fill="#fdf0da" />
<rect x="733" y="325" width="2" height="3" fill="#cbbea6" />
<rect x="735" y="325" width="2" height="3" fill="#fdf0da" />
<rect x="737" y="325" width="2" height="3" fill="#cbbea6" />
<rect x="739" y="325" width="2" height="3" fill="#fdf0da" />
<rect x="741" y="325" width="2" height="3" fill="#cbbea6" />
<rect x="743" y="325" width="2" height="3" fill="#fdf0da" />
<rect x="745" y="325" width="2" height="3" fill="#cbbea6" />
<rect x="747" y="325" width="2" height="3" fill="#fdf0da" />
<rect x="749" y="325" width="2" height="3" fill="#cbbea6" />
<rect x="751" y="325" width="2" height="3" fill="#fdf0da" />
<rect x="753" y="325" width="2" height="3" fill="#cbbea6" />
<rect x="755" y="325" width="2" height="3" fill="#fdf0da" />
<rect x="757" y="325" width="2" height="3" fill="#cbbea6" />
<rect x="759" y="325" width="2" height="3" fill="#fdf0da" />
<rect x="761" y="325" width="2" height="3" fill="#cbbea6" />
<rect x="763" y="325" width="2" height="3" fill="#fdf0da" />
<rect x="765" y="325" width="2" height="3" fill="#cbbea6" />
<rect x="767" y="325" width="2" height="3" fill="#fdf0da" />
<rect x="769" y="325" width="2" height="3" fill="#cbbea6" />
<rect x="771" y="325" width="2" height="3" fill="#fdf0da" />
<rect x="773" y="325" width="2" height="3" fill="#cbbea6" />
<rect x="775" y="325" width="2" height="3" fill="#fdf0da" />
<rect x="777" y="325" width="2" height="3" fill="#cbbea6" />
<rect x="779" y="325" width="2" height="3" fill="#fdf0da" />
<rect x="781" y="325" width="2" height="3" fill="#cbbea6" />
<rect x="783" y="325" width="2" height="3" fill="#fdf0da" />
<rect x="785" y="325" width="2" height="3" fill="#cbbea6" />
<rect x="787" y="325" width="2" height="3" fill="#fdf0da" />
<rect x="789" y="325" width="2" height="3" fill="#cbbea6" />
<rect x="791" y="325" width="2" height="3" fill="#fdf0da" />
<rect x="793" y="325" width="2" height="3" fill="#cbbea6" />
<rect x="795" y="325" width="2" height="3" fill="#fdf0da" />
<rect x="797" y="325" width="2" height="3" fill="#cbbea6" />
<rect x="799" y="325" width="2" height="3" fill="#fdf0da" />
<rect x="801" y="325" width="2" height="3" fill="#cbbea6" />
<rect x="803" y="325" width="2" height="3" fill="#fdf0da" />
<rect x="805" y="325" width="2" height="3" fill="#cbbea6" />
<rect x="807" y="325" width="2" height="3" fill="#fdf0da" />
<rect x="809" y="325" width="2" height="3" fill="#cbbea6" />
<rect x="811" y="325" width="2" height="3" fill="#fdf0da" />
<rect x="813" y="325" width="2" height="3" fill="#cbbea6" />
<rect x="815" y="325" width="2" height="3" fill="#fdf0da" />
<rect x="817" y="325" width="2" height="3" fill="#cbbea6" />
<rect x="819" y="325" width="2" height="3" fill="#fdf0da" />
<rect x="821" y="325" width="2" height="3" fill="#cbbea6" />
<rect x="823" y="325" width="2" height="3" fill="#fdf0da" />
<rect x="825" y="325" width="2" height="3" fill="#cbbea6" />
<rect x="827" y="325" width="2" height="3" fill="#fdf0da" />
<rect x="829" y="325" width="2" height="3" fill="#cbbea6" />
<rect x="831" y="325" width="2" height="3" fill="#fdf0da" />
<rect x="833" y="325" width="2" height="3" fill="#cbbea6" />
<rect x="835" y="325" width="2" height="3" fill="#fdf0da" />
<rect x="837" y="325" width="2" height="3" fill="#cbbea6" />
<rect x="839" y="325" width="2" height="3" fill="#fdf0da" />
<rect x="841" y="325" width="2" height="3" fill="#cbbea6" />
<rect x="843" y="325" width="2" height="3" fill="#fdf0da" />
<rect x="845" y="325" width="2" height="3" fill="#cbbea6" />
<rect x="847" y="325" width="2" height="3" fill="#fdf0da" />
<rect x="849" y="325" width="2" height="3" fill="#cbbea6" />
<rect x="851" y="325" width="2" height="3" fill="#fdf0da" />
<rect x="853" y="325" width="2" height="3" fill="#cbbea6" />
<rect x="855" y="325" width="2" height="3" fill="#fdf0da" />
<rect x="857" y="325" width="2" height="3" fill="#cbbea6" />
<rect x="859" y="325" width="2" height="3" fill="#fdf0da" />
<rect x="861" y="325" width="2" height="3" fill="#cbbea6" />
<rect x="863" y="325" width="2" height="3" fill="#fdf0da" />
<rect x="865" y="325" width="2" height="3" fill="#cbbea6" />
<rect x="871" y="298" width="12" height="27" fill="#f3f3f3" fill-opacity="0.85"/>
<rect x="871" y="325" width="2" height="3" fill="#fdf0da" />
<rect x="873" y="325" width="2" height="3" fill="#cbbea6" />
<rect x="875" y="325" width="2" height="3" fill="#fdf0da" />
<rect x="877" y="325" width="2" height="3" fill="#cbbea6" />
<rect x="879" y="325" width="2" height="3" fill="#fdf0da" />
<rect x="881" y="325" width="2" height="3" fill="#cbbea6" />
<rect x="887" y="298" width="4" height="27" fill="#f3f3f3" fill-opacity="0.85"/>
<rect x="887" y="325" width="2" height="3" fill="#fdf0da" />
<rect x="889" y="325" width="2" height="3" fill="#cbbea6" />
<rect x="895" y="298" width="16" height="27" fill="#f3f3f3" fill-opacity="0.85"/>
<rect x="895" y="325" width="2" height="3" fill="#fdf0da" />
<rect x="897" y="325" width="2" height="3" fill="#cbbea6" />
<rect x="899" y="325" width="2" height="3" fill="#fdf0da" />
<rect x="901" y="325" width="2" height="3" fill="#cbbea6" />
<rect x="903" y="325" width="2" height="3" fill="#fdf0da" />
<rect x="905" y="325" width="2" height="3" fill="#cbbea6" />
<rect x="907" y="325" width="2" height="3" fill="#fdf0da" />
<rect x="909" y="325" width="2" height="3" fill="#cbbea6" />
<rect x="915" y="298" width="12" height="27" fill="#f3f3f3" fill-opacity="0.85"/>
<rect x="915" y="325" width="2" height="3" fill="#fdf0da" />
<rect x="917" y="325" width="2" height="3" fill="#cbbea6" />
<rect x="919" y="325" width="2" height="3" fill="#fdf0da" />
<rect x="921" y="325" width="2" height="3" fill="#cbbea6" />
<rect x="923" y="325" width="2" height="3" fill="#fdf0da" />
<rect x="925" y="325" width="2" height="3" fill="#cbbea6" />
<rect x="931" y="298" width="4" height="27" fill="#f3f3f3" fill-opacity="0.85"/>
<rect x="931" y="325" width="2" height="3" fill="#fdf0da" />
<rect x="933" y="325" width="2" height="3" fill="#cbbea6" />
<rect x="939" y="298" width="20" height="27" fill="#f3f3f3" fill-opacity="0.85"/>
<rect x="939" y="325" width="2" height="3" fill="#fdf0da" />
<rect x="941" y="325" width="2" height="3" fill="#cbbea6" />
<rect x="943" y="325" width="2" height="3" fill="#fdf0da" />
<rect x="945" y="325" width="2" height="3" fill="#cbbea6" />
<rect x="947" y="325" width="2" height="3" fill="#fdf0da" />
<rect x="949" y="325" width="2" height="3" fill="#cbbea6" />
<rect x="951" y="325" width="2" height="3" fill="#fdf0da" />
<rect x="953" y="325" width="2" height="3" fill="#cbbea6" />
<rect x="955" y="325" width="2" height="3" fill="#fdf0da" />
<rect x="957" y="325" width="2" height="3" fill="#cbbea6" />
<rect x="963" y="298" width="8" height="27" fill="#f3f3f3" fill-opacity="0.85"/>
<rect x="963" y="325" width="2" height="3" fill="#fdf0da" />
<rect x="965" y="325" width="2" height="3" fill="#cbbea6" />
<rect x="967" y="325" width="2" height="3" fill="#fdf0da" />
<rect x="969" y="325" width="2" height="3" fill="#cbbea6" />
<rect x="975" y="298" width="8" height="27" fill="#f3f3f3" fill-opacity="0.85"/>
<rect x="975" y="325" width="2" height="3" fill="#fdf0da" />
<rect x="977" y="325" width="2" height="3" fill="#cbbea6" />
<rect x="979" y="325" width="2" height="3" fill="#fdf0da" />
<rect x="981" y="325" width="2" height="3" fill="#cbbea6" />
<rect x="987" y="298" width="12" height="27" fill="#f3f3f3" fill-opacity="0.85"/>
<rect x="987" y="325" width="2" height="3" fill="#fdf0da" />
<rect x="989" y="325" width="2" height="3" fill="#cbbea6" />
<rect x="991" y="325" width="2" height="3" fill="#fdf0da" />
<rect x="993" y="325" width="2" height="3" fill="#cbbea6" />
<rect x="995" y="325" width="2" height="3" fill="#fdf0da" />
<rect x="997" y="325" width="2" height="3" fill="#cbbea6" />
<rect x="1003" y="298" width="4" height="27" fill="#f3f3f3" fill-opacity="0.85"/>
<rect x="1003" y="325" width="2" height="3" fill="#fdf0da" />
<rect x="1005" y="325" width="2" height="3" fill="#cbbea6" />
<rect x="1011" y="298" width="20" height="27" fill="#f3f3f3" fill-opacity="0.85"/>
<rect x="1011" y="325" width="2" height="3" fill="#fdf0da" />
<rect x="1013" y="325" width="2" height="3" fill="#cbbea6" />
<rect x="1015" y="325" width="2" height="3" fill="#fdf0da" />
<rect x="1017" y="325" width="2" height="3" fill="#cbbea6" />
<rect x="1019" y="325" width="2" height="3" fill="#fdf0da" />
<rect x="1021" y="325" width="2" height="3" fill="#cbbea6" />
<rect x="1023" y="325" width="2" height="3" fill="#fdf0da" />
<rect x="1025" y="325" width="2" height="3" fill="#cbbea6" />
<rect x="1027" y="325" width="2" height="3" fill="#fdf0da" />
<rect x="1029" y="325" width="2" height="3" fill="#cbbea6" />
<rect x="1035" y="298" width="15" height="27" fill="#f3f3f3" fill-opacity="0.85"/>
<rect x="1035" y="325" width="2" height="3" fill="#fdf0da" />
<rect x="1037" y="325" width="2" height="3" fill="#cbbea6" />
<rect x="1039" y="325" width="2" height="3" fill="#fdf0da" />
<rect x="1041" y="325" width="2" height="3" fill="#cbbea6" />
<rect x="1043" y="325" width="2" height="3" fill="#fdf0da" />
<rect x="1045" y="325" width="2" height="3" fill="#cbbea6" />
<rect x="1047" y="325" width="2" height="3" fill="#fdf0da" />
<rect x="1049" y="325" width="1" height="3" fill="#cbbea6" />
<rect x="1055" y="298" width="24" height="27" fill="#f3f3f3" fill-opacity="0.85"/>
<rect x="1055" y="325" width="2" height="3" fill="#fdf0da" />
<rect x="1057" y="325" width="2" height="3" fill="#cbbea6" />
<rect x="1059" y="325" width="2" height="3" fill="#fdf0da" />
<rect x="1061" y="325" width="2" height="3" fill="#cbbea6" />
<rect x="1063" y="325" width="2" height="3" fill="#fdf0da" />
<rect x="1065" y="325" width="2" height="3" fill="#cbbea6" />
<rect x="1067" y="325" width="2" height="3" fill="#fdf0da" />
<rect x="1069" y="325" width="2" height="3" fill="#cbbea6" />
<rect x="1071" y="325" width="2" height="3" fill="#fdf0da" />
<rect x="1073" y="325" width="2" height="3" fill="#cbbea6" />
<rect x="1075" y="325" width="2" height="3" fill="#fdf0da" />
<rect x="1077" y="325" width="2" height="3" fill="#cbbea6" />
<rect x="1087" y="298" width="12" height="27" fill="#f3f3f3" fill-opacity="0.85"/>
<rect x="1087" y="325" width="2" height="3" fill="#fdf0da" />
<rect x="1089" y="325" width="2" height="3" fill="#cbbea6" />
<rect x="1091" y="325" width="2" height="3" fill="#fdf0da" />
<rect x="1093" y="325" width="2" height="3" fill="#cbbea6" />
<rect x="1095" y="325" width="2" height="3" fill="#fdf0da" />
<rect x="1097" y="325" width="2" height="3" fill="#cbbea6" />
<rect x="1103" y="298" width="4" height="27" fill="#f3f3f3" fill-opacity="0.85"/>
<rect x="1103" y="325" width="2" height="3" fill="#fdf0da" />
<rect x="1105" y="325" width="2" height="3" fill="#cbbea6" />
<rect x="1111" y="298" width="16" height="27" fill="#f3f3f3" fill-opacity="0.85"/>
<rect x="1111" y="325" width="2" height="3" fill="#fdf0da" />
<rect x="1113" y="325" width="2" height="3" fill="#cbbea6" />
<rect x="1115" y="325" width="2" height="3" fill="#fdf0da" />
<rect x="1117" y="325" width="2" height="3" fill="#cbbea6" />
<rect x="1119" y="325" width="2" height="3" fill="#fdf0da" />
<rect x="1121" y="325" width="2" height="3" fill="#cbbea6" />
<rect x="1123" y="325" width="2" height="3" fill="#fdf0da" />
<rect x="1125" y="325" width="2" height="3" fill="#cbbea6" />
<rect x="1131" y="298" width="20" height="27" fill="#f3f3f3" fill-opacity="0.85"/>
<rect x="1131" y="325" width="2" height="3" fill="#fdf0da" />
<rect x="1133" y="325" width="2" height="3" fill="#cbbea6" />
<rect x="1135" y="325" width="2" height="3" fill="#fdf0da" />
<rect x="1137" y="325" width="2" height="3" fill="#cbbea6" />
<rect x="1139" y="325" width="2" height="3" fill="#fdf0da" />
<rect x="1141" y="325" width="2" height="3" fill="#cbbea6" />
<rect x="1143" y="325" width="2" height="3" fill="#fdf0da" />
<rect x="1145" y="325" width="2" height="3" fill="#cbbea6" />
<rect x="1147" y="325" width="2" height="3" fill="#fdf0da" />
<rect x="1149" y="325" width="2" height="3" fill="#cbbea6" />
<rect x="1155" y="298" width="4" height="27" fill="#f3f3f3" fill-opacity="0.85"/>
<rect x="1155" y="325" width="2" height="3" fill="#fdf0da" />
<rect x="1157" y="325" width="2" height="3" fill="#cbbea6" />
<rect x="1163" y="298" width="8" height="27" fill="#f3f3f3" fill-opacity="0.85"/>
<rect x="1163" y="325" width="2" height="3" fill="#fdf0da" />
<rect x="1165" y="325" width="2" height="3" fill="#cbbea6" />
<rect x="1167" y="325" width="2" height="3" fill="#fdf0da" />
<rect x="1169" y="325" width="2" height="3" fill="#cbbea6" />
<rect x="1175" y="298" width="4" height="27" fill="#f3f3f3" fill-opacity="0.85"/>
<rect x="1175" y="325" width="2" height="3" fill="#fdf0da" />
<rect x="1177" y="325" width="2" height="3" fill="#cbbea6" />
<rect x="1183" y="298" width="4" height="27" fill="#f3f3f3" fill-opacity="0.85"/>
<rect x="1183" y="325" width="2" height="3" fill="#fdf0da" />
<rect x="1185" y="325" width="2" height="3" fill="#cbbea6" />
<rect x="1191" y="298" width="8" height="27" fill="#f3f3f3" fill-opacity="0.85"/>
<rect x="1191" y="325" width="2" height="3" fill="#fdf0da" />
<rect x="1193" y="325" width="2" height="3" fill="#cbbea6" />
<rect x="1195" y="325" width="2" height="3" fill="#fdf0da" />
<rect x="1197" y="325" width="2" height="3" fill="#cbbea6" />
<rect x="1203" y="298" width="4" height="27" fill="#f3f3f3" fill-opacity="0.85"/>
<rect x="1203" y="325" width="2" height="3" fill="#fdf0da" />
<rect x="1205" y="325" width="2" height="3" fill="#cbbea6" />
<rect x="1215" y="298" width="12" height="27" fill="#f3f3f3" fill-opacity="0.85"/>
<rect x="1215" y="325" width="2" height="3" fill="#fdf0da" />
<rect x="1217" y="325" width="2" height="3" fill="#cbbea6" />
<rect x="1219" y="325" width="2" height="3" fill="#fdf0da" />
<rect x="1221" y="325" width="2" height="3" fill="#cbbea6" />
<rect x="1223" y="325" width="2" height="3" fill="#fdf0da" />
<rect x="1225" y="325" width="2" height="3" fill="#cbbea6" />
<rect x="1231" y="298" width="4" height="27" fill="#f3f3f3" fill-opacity="0.85"/>
<rect x="1231" y="325" width="2" height="3" fill="#fdf0da" />
<rect x="1233" y="325" width="2" height="3" fill="#cbbea6" />
<rect x="1239" y="298" width="8" height="27" fill="#f3f3f3" fill-opacity="0.85"/>
<rect x="1239" y="325" width="2" height="3" fill="#fdf0da" />
<rect x="1241" y="325" width="2" height="3" fill="#cbbea6" />
<rect x="1243" y="325" width="2" height="3" fill="#fdf0da" />
<rect x="1245" y="325" width="2" height="3" fill="#cbbea6" />
<rect x="1251" y="298" width="8" height="27" fill="#f3f3f3" fill-opacity="0.85"/>
<rect x="1251" y="325" width="2" height="3" fill="#fdf0da" />
<rect x="1253" y="325" width="2" height="3" fill="#cbbea6" />
<rect x="1255" y="325" width="2" height="3" fill="#fdf0da" />
<rect x="1257" y="325" width="2" height="3" fill="#cbbea6" />
<rect x="1263" y="298" width="16" height="27" fill="#f3f3f3" fill-opacity="0.85"/>
<rect x="1263" y="325" width="2" height="3" fill="#fdf0da" />
<rect x="1265" y="325" width="2" height="3" fill="#cbbea6" />
<rect x="1267" y="325" width="2" height="3" fill="#fdf0da" />
<rect x="1269" y="325" width="2" height="3" fill="#cbbea6" />
<rect x="1271" y="325" width="2" height="3" fill="#fdf0da" />
<rect x="1273" y="325" width="2" height="3" fill="#cbbea6" />
<rect x="1275" y="325" width="2" height="3" fill="#fdf0da" />
<rect x="1277" y="325" width="2" height="3" fill="#cbbea6" />
<rect x="1283" y="298" width="20" height="27" fill="#f3f3f3" fill-opacity="0.85"/>
<rect x="1283" y="325" width="2" height="3" fill="#fdf0da" />
<rect x="1285" y="325" width="2" height="3" fill="#cbbea6" />
<rect x="1287" y="325" width="2" height="3" fill="#fdf0da" />
<rect x="1289" y="325" width="2" height="3" fill="#cbbea6" />
<rect x="1291" y="325" width="2" height="3" fill="#fdf0da" />
<rect x="1293" y="325" width="2" height="3" fill="#cbbea6" />
<rect x="1295" y="325" width="2" height="3" fill="#fdf0da" />
<rect x="1297" y="325" width="2" height="3" fill="#cbbea6" />
<rect x="1299" y="325" width="2" height="3" fill="#fdf0da" />
<rect x="1301" y="325" width="2" height="3" fill="#cbbea6" />
<rect x="1307" y="298" width="4" height="27" fill="#f3f3f3" fill-opacity="0.85"/>
<rect x="1307" y="325" width="2" height="3" fill="#fdf0da" />
<rect x="1309" y="325" width="2" height="3" fill="#cbbea6" />
<rect x="1315" y="298" width="16" height="27" fill="#f3f3f3" fill-opacity="0.85"/>
<rect x="1315" y="325" width="2" height="3" fill="#fdf0da" />
<rect x="1317" y="325" width="2" height="3" fill="#cbbea6" />
<rect x="1319" y="325" width="2" height="3" fill="#fdf0da" />
<rect x="1321" y="325" width="2" height="3" fill="#cbbea6" />
<rect x="1323" y="325" width="2" height="3" fill="#fdf0da" />
<rect x="1325" y="325" width="2" height="3" fill="#cbbea6" />
<rect x="1327" y="325" width="2" height="3" fill="#fdf0da" />
<rect x="1329" y="325" width="2" height="3" fill="#cbbea6" />
<rect x="1339" y="298" width="8" height="27" fill="#f3f3f3" fill-opacity="0.85"/>
<rect x="1339" y="325" width="2" height="3" fill="#fdf0da" />
<rect x="1341" y="325" width="2" height="3" fill="#cbbea6" />
<rect x="1343" y="325" width="2" height="3" fill="#fdf0da" />
<rect x="1345" y="325" width="2" height="3" fill="#cbbea6" />
<rect x="1351" y="298" width="8" height="27" fill="#f3f3f3" fill-opacity="0.85"/>
<rect x="1351" y="325" width="2" height="3" fill="#fdf0da" />
<rect x="1353" y="325" width="2" height="3" fill="#cbbea6" />
<rect x="1355" y="325" width="2" height="3" fill="#fdf0da" />
<rect x="1357" y="325" width="2" height="3" fill="#cbbea6" />
<rect x="1363" y="298" width="12" height="27" fill="#f3f3f3" fill-opacity="0.85"/>
<rect x="1363" y="325" width="2" height="3" fill="#fdf0da" />
<rect x="1365" y="325" width="2" height="3" fill="#cbbea6" />
<rect x="1367" y="325" width="2" height="3" fill="#fdf0da" />
<rect x="1369" y="325" width="2" height="3" fill="#cbbea6" />
<rect x="1371" y="325" width="2" height="3" fill="#fdf0da" />
<rect x="1373" y="325" width="2" height="3" fill="#cbbea6" />
<rect x="1379" y="298" width="4" height="27" fill="#f3f3f3" fill-opacity="0.85"/>
<rect x="1379" y="325" width="2" height="3" fill="#fdf0da" />
<rect x="1381" y="325" width="2" height="3" fill="#cbbea6" />
<rect x="1387" y="298" width="20" height="27" fill="#f3f3f3" fill-opacity="0.85"/>
<rect x="1387" y="325" width="2" height="3" fill="#fdf0da" />
<rect x="1389" y="325" width="2" height="3" fill="#cbbea6" />
<rect x="1391" y="325" width="2" height="3" fill="#fdf0da" />
<rect x="1393" y="325" width="2" height="3" fill="#cbbea6" />
<rect x="1395" y="325" width="2" height="3" fill="#fdf0da" />
<rect x="1397" y="325" width="2" height="3" fill="#cbbea6" />
<rect x="1399" y="325" width="2" height="3" fill="#fdf0da" />
<rect x="1401" y="325" width="2" height="3" fill="#cbbea6" />
<rect x="1403" y="325" width="2" height="3" fill="#fdf0da" />
<rect x="1405" y="325" width="2" height="3" fill="#cbbea6" />
<rect x="1411" y="298" width="16" height="27" fill="#f3f3f3" fill-opacity="0.85"/>
<rect x="1411" y="325" width="2" height="3" fill="#fdf0da" />
<rect x="1413" y="325" width="2" height="3" fill="#cbbea6" />
<rect x="1415" y="325" width="2" height="3" fill="#fdf0da" />
<rect x="1417" y="325" width="2" height="3" fill="#cbbea6" />
<rect x="1419" y="325" width="2" height="3" fill="#fdf0da" />
<rect x="1421" y="325" width="2" height="3" fill="#cbbea6" />
<rect x="1423" y="325" width="2" height="3" fill="#fdf0da" />
<rect x="1425" y="325" width="2" height="3" fill="#cbbea6" />
<rect x="1431" y="298" width="4" height="27" fill="#f3f3f3" fill-opacity="0.85"/>
<rect x="1431" y="325" width="2" height="3" fill="#fdf0da" />
<rect x="1433" y="325" width="2" height="3" fill="#cbbea6" />
<rect x="1439" y="298" width="16" height="27" fill="#f3f3f3" fill-opacity="0.85"/>
<rect x="1439" y="325" width="2" height="3" fill="#fdf0da" />
<rect x="1441" y="325" width="2" height="3" fill="#cbbea6" />
<rect x="1443" y="325" width="2" height="3" fill="#fdf0da" />
<rect x="1445" y="325" width="2" height="3" fill="#cbbea6" />
<rect x="1447" y="325" width="2" height="3" fill="#fdf0da" />
<rect x="1449" y="325" width="2" height="3" fill="#cbbea6" />
<rect x="1451" y="325" width="2" height="3" fill="#fdf0da" />
<rect x="1453" y="325" width="2" height="3" fill="#cbbea6" />
<rect x="1459" y="298" width="12" height="27" fill="#f3f3f3" fill-opacity="0.85"/>
<rect x="1459" y="325" width="2" height="3" fill="#fdf0da" />
<rect x="1461" y="325" width="2" height="3" fill="#cbbea6" />
<rect x="1463" y="325" width="2" height="3" fill="#fdf0da" />
<rect x="1465" y="325" width="2" height="3" fill="#cbbea6" />
<rect x="1467" y="325" width="2" height="3" fill="#fdf0da" />
<rect x="1469" y="325" width="2" height="3" fill="#cbbea6" />
<rect x="1475" y="298" width="8" height="27" fill="#f3f3f3" fill-opacity="0.85"/>
<rect x="1475" y="325" width="2" height="3" fill="#fdf0da" />
<rect x="1477" y="325" width="2" height="3" fill="#cbbea6" />
<rect x="1479" y="325" width="2" height="3" fill="#fdf0da" />
<rect x="1481" y="325" width="2" height="3" fill="#cbbea6" />
<rect x="1487" y="298" width="20" height="27" fill="#f3f3f3" fill-opacity="0.85"/>
<rect x="1487" y="325" width="2" height="3" fill="#fdf0da" />
<rect x="1489" y="325" width="2" height="3" fill="#cbbea6" />
<rect x="1491" y="325" width="2" height="3" fill="#fdf0da" />
<rect x="1493" y="325" width="2" height="3" fill="#cbbea6" />
<rect x="1495" y="325" width="2" height="3" fill="#fdf0da" />
<rect x="1497" y="325" width="2" height="3" fill="#cbbea6" />
<rect x="1499" y="325" width="2" height="3" fill="#fdf0da" />
<rect x="1501" y="325" width="2" height="3" fill="#cbbea6" />
<rect x="1503" y="325" width="2" height="3" fill="#fdf0da" />
<rect x="1505" y="325" width="2" height="3" fill="#cbbea6" />
<rect x="1511" y="298" width="12" height="27" fill="#f3f3f3" fill-opacity="0.85"/>
<rect x="1511" y="325" width="2" height="3" fill="#fdf0da" />
<rect x="1513" y="325" width="2" height="3" fill="#cbbea6" />
<rect x="1515" y="325" width="2" height="3" fill="#fdf0da" />
<rect x="1517" y="325" width="2" height="3" fill="#cbbea6" />
<rect x="1519" y="325" width="2" height="3" fill="#fdf0da" />
<rect x="1521" y="325" width="2" height="3" fill="#cbbea6" />
<rect x="1527" y="298" width="4" height="27" fill="#f3f3f3" fill-opacity="0.85"/>
<rect x="1527" y="325" width="2" height="3" fill="#fdf0da" />
<rect x="1529" y="325" width="2" height="3" fill="#cbbea6" />
<rect x="1535" y="298" width="20" height="27" fill="#f3f3f3" fill-opacity="0.85"/>
<rect x="1535" y="325" width="2" height="3" fill="#fdf0da" />
<rect x="1537" y="325" width="2" height="3" fill="#cbbea6" />
<rect x="1539" y="325" width="2" height="3" fill="#fdf0da" />
<rect x="1541" y="325" width="2" height="3" fill="#cbbea6" />
<rect x="1543" y="325" width="2" height="3" fill="#fdf0da" />
<rect x="1545" y="325" width="2" height="3" fill="#cbbea6" />
<rect x="1547" y="325" width="2" height="3" fill="#fdf0da" />
<rect x="1549" y="325" width="2" height="3" fill="#cbbea6" />
<rect x="1551" y="325" width="2" height="3" fill="#fdf0da" />
<rect x="1553" y="325" width="2" height="3" fill="#cbbea6" />
<rect x="1559" y="298" width="12" height="27" fill="#f3f3f3" fill-opacity="0.85"/>
<rect x="1559" y="325" width="2" height="3" fill="#fdf0da" />
<rect x="1561" y="325" width="2" height="3" fill="#cbbea6" />
<rect x="1563" y="325" width="2" height="3" fill="#fdf0da" />
<rect x="1565" y="325" width="2" height="3" fill="#cbbea6" />
<rect x="1567" y="325" width="2" height="3" fill="#fdf0da" />
<rect x="1569" y="325" width="2" height="3" fill="#cbbea6" />
<rect x="1575" y="298" width="8" height="27" fill="#f3f3f3" fill-opacity="0.85"/>
<rect x="1575" y="325" width="2" height="3" fill="#fdf0da" />
<rect x="1577" y="325" width="2" height="3" fill="#cbbea6" />
<rect x="1579" y="325" width="2" height="3" fill="#fdf0da" />
<rect x="1581" y="325" width="2" height="3" fill="#cbbea6" />
<rect x="1587" y="298" width="20" height="27" fill="#f3f3f3" fill-opacity="0.85"/>
<rect x="1587" y="325" width="2" height="3" fill="#fdf0da" />
<rect x="1589" y="325" width="2" height="3" fill="#cbbea6" />
<rect x="1591" y="325" width="2" height="3" fill="#fdf0da" />
<rect x="1593" y="325" width="2" height="3" fill="#cbbea6" />
<rect x="1595" y="325" width="2" height="3" fill="#fdf0da" />
<rect x="1597" y="325" width="2" height="3" fill="#cbbea6" />
<rect x="1599" y="325" width="2" height="3" fill="#fdf0da" />
<rect x="1601" y="325" width="2" height="3" fill="#cbbea6" />
<rect x="1603" y="325" width="2" height="3" fill="#fdf0da" />
<rect x="1605" y="325" width="2" height="3" fill="#cbbea6" />
<rect x="1611" y="298" width="12" height="27" fill="#f3f3f3" fill-opacity="0.85"/>
<rect x="1611" y="325" width="2" height="3" fill="#fdf0da" />
<rect x="1613" y="325" width="2" height="3" fill="#cbbea6" />
<rect x="1615" y="325" width="2" height="3" fill="#fdf0da" />
<rect x="1617" y="325" width="2" height="3" fill="#cbbea6" />
<rect x="1619" y="325" width="2" height="3" fill="#fdf0da" />
<rect x="1621" y="325" width="2" height="3" fill="#cbbea6" />
<rect x="1627" y="298" width="4" height="27" fill="#f3f3f3" fill-opacity="0.85"/>
<rect x="1627" y="325" width="2" height="3" fill="#fdf0da" />
<rect x="1629" y="325" width="2" height="3" fill="#cbbea6" />
<rect x="1635" y="298" width="16" height="27" fill="#f3f3f3" fill-opacity="0.85"/>
<rect x="1635" y="325" width="2" height="3" fill="#fdf0da" />
<rect x="1637" y="325" width="2" height="3" fill="#cbbea6" />
<rect x="1639" y="325" width="2" height="3" fill="#fdf0da" />
<rect x="1641" y="325" width="2" height="3" fill="#cbbea6" />
<rect x="1643" y="325" width="2" height="3" fill="#fdf0da" />
<rect x="1645" y="325" width="2" height="3" fill="#cbbea6" />
<rect x="1647" y="325" width="2" height="3" fill="#fdf0da" />
<rect x="1649" y="325" width="2" height="3" fill="#cbbea6" />
<rect x="1655" y="298" width="4" height="27" fill="#f3f3f3" fill-opacity="0.85"/>
<rect x="1655" y="325" width="2" height="3" fill="#fdf0da" />
<rect x="1657" y="325" width="2" height="3" fill="#cbbea6" />
<rect x="1663" y="298" width="32" height="27" fill="#f3f3f3" fill-opacity="0.85"/>
<rect x="1663" y="325" width="2" height="3" fill="#fdf0da" />
<rect x="1665" y="325" width="2" height="3" fill="#cbbea6" />
<rect x="1667" y="325" width="2" height="3" fill="#fdf0da" />
<rect x="1669" y="325" width="2" height="3" fill="#cbbea6" />
<rect x="1671" y="325" width="2" height="3" fill="#fdf0da" />
<rect x="1673" y="325" width="2" height="3" fill="#cbbea6" />
<rect x="1675" y="325" width="2" height="3" fill="#fdf0da" />
<rect x="1677" y="325" width="2" height="3" fill="#cbbea6" />
<rect x="1679" y="325" width="2" height="3" fill="#fdf0da" />
<rect x="1681" y="325" width="2" height="3" fill="#cbbea6" />
<rect x="1683" y="325" width="2" height="3" fill="#fdf0da" />
<rect x="1685" y="325" width="2" height="3" fill="#cbbea6" />
<rect x="1687" y="325" width="2" height="3" fill="#fdf0da" />
<rect x="1689" y="325" width="2" height="3" fill="#cbbea6" />
<rect x="1691" y="325" width="2" height="3" fill="#fdf0da" />
<rect x="1693" y="325" width="2" height="3" fill="#cbbea6" />
<rect x="1699" y="298" width="28" height="27" fill="#f3f3f3" fill-opacity="0.85"/>
<rect x="1699" y="325" width="2" height="3" fill="#fdf0da" />
<rect x="1701" y="325" width="2" height="3" fill="#cbbea6" />
<rect x="1703" y="325" width="2" height="3" fill="#fdf0da" />
<rect x="1705" y="325" width="2" height="3" fill="#cbbea6" />
<rect x="1707" y="325" width="2" height="3" fill="#fdf0da" />
<rect x="1709" y="325" width="2" height="3" fill="#cbbea6" />
<rect x="1711" y="325" width="2" height="3" fill="#fdf0da" />
<rect x="1713" y="325" width="2" height="3" fill="#cbbea6" />
<rect x="1715" y="325" width="2" height="3" fill="#fdf0da" />
<rect x="1717" y="325" width="2" height="3" fill="#cbbea6" />
<rect x="1719" y="325" width="2" height="3" fill="#fdf0da" />
<rect x="1721" y="325" width="2" height="3" fill="#cbbea6" />
<rect x="1723" y="325" width="2" height="3" fill="#fdf0da" />
<rect x="1725" y="325" width="2" height="3" fill="#cbbea6" />
<rect x="1731" y="298" width="12" height="27" fill="#f3f3f3" fill-opacity="0.85"/>
<rect x="1731" y="325" width="2" height="3" fill="#fdf0da" />
<rect x="1733" y="325" width="2" height="3" fill="#cbbea6" />
<rect x="1735" y="325" width="2" height="3" fill="#fdf0da" />
<rect x="1737" y="325" width="2" height="3" fill="#cbbea6" />
<rect x="1739" y="325" width="2" height="3" fill="#fdf0da" />
<rect x="1741" y="325" width="2" height="3" fill="#cbbea6" />
<rect x="1747" y="298" width="4" height="27" fill="#f3f3f3" fill-opacity="0.85"/>
<rect x="1747" y="325" width="2" height="3" fill="#fdf0da" />
<rect x="1749" y="325" width="2" height="3" fill="#cbbea6" />
<rect x="1755" y="298" width="16" height="27" fill="#f3f3f3" fill-opacity="0.85"/>
<rect x="1755" y="325" width="2" height="3" fill="#fdf0da" />
<rect x="1757" y="325" width="2" height="3" fill="#cbbea6" />
<rect x="1759" y="325" width="2" height="3" fill="#fdf0da" />
<rect x="1761" y="325" width="2" height="3" fill="#cbbea6" />
<rect x="1763" y="325" width="2" height="3" fill="#fdf0da" />
<rect x="1765" y="325" width="2" height="3" fill="#cbbea6" />
<rect x="1767" y="325" width="2" height="3" fill="#fdf0da" />
<rect x="1769" y="325" width="2" height="3" fill="#cbbea6" />
<rect x="1775" y="298" width="24" height="27" fill="#f3f3f3" fill-opacity="0.85"/>
<rect x="1775" y="325" width="2" height="3" fill="#fdf0da" />
<rect x="1777" y="325" width="2" height="3" fill="#cbbea6" />
<rect x="1779" y="325" width="2" height="3" fill="#fdf0da" />
<rect x="1781" y="325" width="2" height="3" fill="#cbbea6" />
<rect x="1783" y="325" width="2" height="3" fill="#fdf0da" />
<rect x="1785" y="325" width="2" height="3" fill="#cbbea6" />
<rect x="1787" y="325" width="2" height="3" fill="#fdf0da" />
<rect x="1789" y="325" width="2" height="3" fill="#cbbea6" />
<rect x="1791" y="325" width="2" height="3" fill="#fdf0da" />
<rect x="1793" y="325" width="2" height="3" fill="#cbbea6" />
<rect x="1795" y="325" width="2" height="3" fill="#fdf0da" />
<rect x="1797" y="325" width="2" height="3" fill="#cbbea6" />
<rect x="1807" y="298" width="12" height="27" fill="#f3f3f3" fill-opacity="0.85"/>
<rect x="1807" y="325" width="2" height="3" fill="#fdf0da" />
<rect x="1809" y="325" width="2" height="3" fill="#cbbea6" />
<rect x="1811" y="325" width="2" height="3" fill="#fdf0da" />
<rect x="1813" y="325" width="2" height="3" fill="#cbbea6" />
<rect x="1815" y="325" width="2" height="3" fill="#fdf0da" />
<rect x="1817" y="325" width="2" height="3" fill="#cbbea6" />
<rect x="1823" y="298" width="4" height="27" fill="#f3f3f3" fill-opacity="0.85"/>
<rect x="1823" y="325" width="2" height="3" fill="#fdf0da" />
<rect x="1825" y="325" width="2" height="3" fill="#cbbea6" />
<rect x="1831" y="298" width="152" height="27" fill="#f3f3f3" fill-opacity="0.85"/>
<rect x="1831" y="321" width="2" height="7" fill="#fdf0da" />
<rect x="1833" y="321" width="2" height="7" fill="#cbbea6" />
<rect x="1835" y="325" width="2" height="3" fill="#fdf0da" />
<rect x="1837" y="325" width="2" height="3" fill="#cbbea6" />
<rect x="1839" y="325" width="2" height="3" fill="#fdf0da" />
<rect x="1841" y="325" width="2" height="3" fill="#cbbea6" />
<rect x="1843" y="325" width="2" height="3" fill="#fdf0da" />
<rect x="1845" y="325" width="2" height="3" fill="#cbbea6" />
<rect x="1847" y="325" width="2" height="3" fill="#fdf0da" />
<rect x="1849" y="325" width="2" height="3" fill="#cbbea6" />
<rect x="1851" y="325" width="2" height="3" fill="#fdf0da" />
<rect x="1853" y="325" width="2" height="3" fill="#cbbea6" />
<rect x="1855" y="325" width="2" height="3" fill="#fdf0da" />
<rect x="1857" y="325" width="2" height="3" fill="#cbbea6" />
<rect x="1859" y="325" width="2" height="3" fill="#fdf0da" />
<rect x="1861" y="325" width="2" height="3" fill="#cbbea6" />
<rect x="1863" y="325" width="2" height="3" fill="#fdf0da" />
<rect x="1865" y="325" width="2" height="3" fill="#cbbea6" />
<rect x="1867" y="325" width="2" height="3" fill="#fdf0da" />
<rect x="1869" y="325" width="2" height="3" fill="#cbbea6" />
<rect x="1871" y="325" width="2" height="3" fill="#fdf0da" />
<rect x="1873" y="325" width="2" height="3" fill="#cbbea6" />
<rect x="1875" y="325" width="2" height="3" fill="#fdf0da" />
<rect x="1877" y="325" width="2" height="3" fill="#cbbea6" />
<rect x="1879" y="325" width="2" height="3" fill="#fdf0da" />
<rect x="1881" y="325" width="2" height="3" fill="#cbbea6" />
<rect x="1883" y="325" width="2" height="3" fill="#fdf0da" />
<rect x="1885" y="325" width="2" height="3" fill="#cbbea6" />
<rect x="1887" y="325" width="2" height="3" fill="#fdf0da" />
<rect x="1889" y="325" width="2" height="3" fill="#cbbea6" />
<rect x="1891" y="325" width="2" height="3" fill="#fdf0da" />
<rect x="1893" y="325" width="2" height="3" fill="#cbbea6" />
<rect x="1895" y="325" width="2" height="3" fill="#fdf0da" />
<rect x="1897" y="325" width="2" height="3" fill="#cbbea6" />
<rect x="1899" y="325" width="2" height="3" fill="#fdf0da" />
<rect x="1901" y="325" width="2" height="3" fill="#cbbea6" />
<rect x="1903" y="325" width="2" height="3" fill="#fdf0da" />
<rect x="1905" y="325" width="2" height="3" fill="#cbbea6" />
<rect x="1907" y="325" width="2" height="3" fill="#fdf0da" />
<rect x="1909" y="325" width="2" height="3" fill="#cbbea6" />
<rect x="1911" y="325" width="2" height="3" fill="#fdf0da" />
<rect x="1913" y="325" width="2" height="3" fill="#cbbea6" />
<rect x="1915" y="325" width="2" height="3" fill="#fdf0da" />
<rect x="1917" y="325" width="2" height="3" fill="#cbbea6" />
<rect x="1919" y="325" width="2" height="3" fill="#fdf0da" />
<rect x="1921" y="325" width="2" height="3" fill="#cbbea6" />
<rect x="1923" y="324" width="2" height="4" fill="#fdf0da" />
<rect x="1925" y="324" width="2" height="4" fill="#cbbea6" />
<rect x="1927" y="322" width="2" height="6" fill="#fdf0da" />
<rect x="1929" y="322" width="2" height="6" fill="#cbbea6" />
<rect x="1931" y="318" width="2" height="10" fill="#fdf0da" />
<rect x="1933" y="318" width="2" height="10" fill="#cbbea6" />
<rect x="1935" y="317" width="2" height="11" fill="#fdf0da" />
<rect x="1937" y="317" width="2" height="11" fill="#cbbea6" />
<rect x="1939" y="318" width="2" height="10" fill="#fdf0da" />
<rect x="1941" y="318" width="2" height="10" fill="#cbbea6" />
<rect x="1943" y="324" width="2" height="4" fill="#fdf0da" />
<rect x="1945" y="324" width="2" height="4" fill="#cbbea6" />
<rect x="1947" y="325" width="2" height="3" fill="#fdf0da" />
<rect x="1949" y="325" width="2" height="3" fill="#cbbea6" />
<rect x="1951" y="325" width="2" height="3" fill="#fdf0da" />
<rect x="1953" y="325" width="2" height="3" fill="#cbbea6" />
<rect x="1955" y="325" width="2" height="3" fill="#fdf0da" />
<rect x="1957" y="325" width="2" height="3" fill="#cbbea6" />
<rect x="1959" y="325" width="2" height="3" fill="#fdf0da" />
<rect x="1961" y="325" width="2" height="3" fill="#cbbea6" />
<rect x="1963" y="325" width="2" height="3" fill="#fdf0da" />
<rect x="1965" y="325" width="2" height="3" fill="#cbbea6" />
<rect x="1967" y="325" width="2" height="3" fill="#fdf0da" />
<rect x="1969" y="325" width="2" height="3" fill="#cbbea6" />
<rect x="1971" y="325" width="2" height="3" fill="#fdf0da" />
<rect x="1973" y="325" width="2" height="3" fill="#cbbea6" />
<rect x="1975" y="325" width="2" height="3" fill="#fdf0da" />
<rect x="1977" y="325" width="2" height="3" fill="#cbbea6" />
<rect x="1979" y="325" width="2" height="3" fill="#fdf0da" />
<rect x="1981" y="325" width="2" height="3" fill="#cbbea6" />
<rect x="507" y="328" width="4" height="31" fill="#efefef" />
<rect x="507" y="357" width="4" height="2" fill="#aaaaaa" />
<rect x="823" y="200" width="20" height="16" fill="#f2f2f2" />
<rect x="823" y="198" width="16" height="2" fill="#66e633" />
<rect x="839" y="198" width="4" height="2" fill="#33bbee" />
<rect x="1831" y="178" width="4" height="16" fill="#f2f2f2" />
<rect x="1831" y="194" width="4" height="2" fill="#74b4ea" />
<rect x="1851" y="178" width="8" height="16" fill="#f2f2f2" />
<rect x="1851" y="194" width="8" height="2" fill="#74b4ea" />
<rect x="1863" y="178" width="4" height="16" fill="#f2f2f2" />
<rect x="1863" y="194" width="4" height="2" fill="#74b4ea" />
<rect x="1871" y="178" width="4" height="16" fill="#f2f2f2" />
<rect x="1871" y="194" width="4" height="2" fill="#74b4ea" />
<rect x="1879" y="178" width="4" height="16" fill="#f2f2f2" />
<rect x="1879" y="194" width="4" height="2" fill="#74b4ea" />
<rect x="1887" y="178" width="8" height="16" fill="#f2f2f2" />
<rect x="1887" y="194" width="8" height="2" fill="#74b4ea" />
<rect x="1899" y="178" width="4" height="16" fill="#f2f2f2" />
<rect x="1899" y="194" width="4" height="2" fill="#74b4ea" />
<rect x="1907" y="178" width="4" height="16" fill="#f2f2f2" />
<rect x="1907" y="194" width="4" height="2" fill="#74b4ea" />
<rect x="1915" y="178" width="8" height="16" fill="#f2f2f2" />
<rect x="1915" y="194" width="8" height="2" fill="#74b4ea" />
<rect x="1927" y="178" width="24" height="16" fill="#f2f2f2" />
<rect x="1927" y="194" width="24" height="2" fill="#74b4ea" />
<rect x="1959" y="178" width="4" height="16" fill="#f2f2f2" />
<rect x="1959" y="194" width="4" height="2" fill="#74b4ea" />
<rect x="1927" y="180" width="4" height="16" fill="#74b4ea" />
<rect x="1931" y="178" width="12" height="18" fill="#74b4ea" />
<rect x="1943" y="185" width="4" height="11" fill="#74b4ea" />
<rect x="1831" y="198" width="4" height="2" fill="#ff2a2a" />
<rect x="1835" y="198" width="4" height="2" fill="#00b8ff" />
<rect x="1871" y="198" width="4" height="2" fill="#00b8ff" />
<rect x="1899" y="198" width="4" height="2" fill="#ff2a2a" />
<rect x="1915" y="198" width="4" height="2" fill="#00cc88" />
<rect x="1927" y="198" width="20" height="2" fill="#ff2a2a" />
<rect x="1947" y="198" width="8" height="2" fill="#66ee00" />
<rect x="1959" y="198" width="4" height="2" fill="#ff2a2a" />
<rect x="1831" y="200" width="8" height="16" fill="#f2f2f2" />
<rect x="1871" y="200" width="4" height="16" fill="#f2f2f2" />
<rect x="1899" y="200" width="4" height="16" fill="#f2f2f2" />
<rect x="1915" y="200" width="4" height="16" fill="#f2f2f2" />
<rect x="1927" y="200" width="28" height="16" fill="#f2f2f2" />
<rect x="1959" y="200" width="4" height="16" fill="#f2f2f2" />
<rect x="827" y="398" width="4" height="28" fill="#f2f2f2" />
<rect x="835" y="398" width="8" height="28" fill="#f2f2f2" />
<rect x="827" y="426" width="4" height="2" fill="#b8b8b8" />
<rect x="835" y="426" width="4" height="2" fill="#b8b8b8" />
<rect x="839" y="426" width="4" height="2" fill="#7a22ff" />
<rect x="827" y="430" width="4" height="20" fill="#f2f2f2" />
<rect x="835" y="430" width="4" height="20" fill="#f2f2f2" />
<rect x="835" y="394" width="8" height="2" fill="#1e961e" />
<rect x="1831" y="366" width="8" height="30" fill="#f2f2f2" />
<rect x="1851" y="366" width="4" height="30" fill="#f2f2f2" />
<rect x="1943" y="366" width="12" height="30" fill="#f2f2f2" />
<rect x="1959" y="366" width="4" height="30" fill="#f2f2f2" />
<rect x="1831" y="381" width="4" height="15" fill="#b0b0b0" />
<rect x="1835" y="389" width="4" height="7" fill="#109a10" />
<rect x="1851" y="394" width="4" height="2" fill="#b8b8b8" />
<rect x="1943" y="385" width="6" height="11" fill="#06a006" />
<rect x="1949" y="385" width="2" height="11" fill="#9ac09a" />
<rect x="1951" y="381" width="4" height="15" fill="#b0b0b0" />
<rect x="1959" y="392" width="4" height="4" fill="#c0c0c0" />
<rect x="1831" y="398" width="4" height="28" fill="#f2f2f2" />
<rect x="1851" y="398" width="4" height="28" fill="#f2f2f2" />
<rect x="1943" y="398" width="4" height="28" fill="#f2f2f2" />
<rect x="1951" y="398" width="4" height="28" fill="#f2f2f2" />
<rect x="1959" y="398" width="4" height="28" fill="#f2f2f2" />
<rect x="1831" y="426" width="4" height="2" fill="#1818ff" />
<rect x="1851" y="426" width="4" height="2" fill="#b8b8b8" />
<rect x="1943" y="426" width="4" height="2" fill="#1818ff" />
<rect x="1951" y="426" width="4" height="2" fill="#1818ff" />
<rect x="1959" y="426" width="4" height="2" fill="#b8b8b8" />
<rect x="1831" y="430" width="4" height="28" fill="#f2f2f2" />
<rect x="1851" y="430" width="4" height="28" fill="#f2f2f2" />
<rect x="1959" y="430" width="4" height="28" fill="#f2f2f2" />
<rect x="1831" y="458" width="4" height="2" fill="#990099" />
<rect x="1851" y="458" width="4" height="2" fill="#b8b8b8" />
<rect x="1959" y="458" width="4" height="2" fill="#b8b8b8" />
<rect x="1959" y="462" width="4" height="12" fill="#b0b0b0" />
<rect x="1831" y="489" width="4" height="21" fill="#1a1aff" />
<rect x="1943" y="480" width="14" height="30" fill="#1a1aff" />
<rect x="1956" y="480" width="2" height="30" fill="#8a8ad0" />
<rect x="1958" y="493" width="4" height="17" fill="#1a1aff" />
<rect x="1835" y="512" width="16" height="30" fill="#1a1aff" />
<rect x="1831" y="527" width="4" height="15" fill="#1a1aff" />
<rect x="1851" y="538" width="4" height="4" fill="#1a1aff" />
<rect x="1943" y="531" width="7" height="11" fill="#1a1aff" />
<rect x="1951" y="512" width="7" height="30" fill="#1a1aff" />
<rect x="1958" y="530" width="4" height="12" fill="#1a1aff" />
<rect x="1851" y="544" width="4" height="28" fill="#f2f2f2" />
<rect x="1851" y="572" width="4" height="2" fill="#1a1aff" />
<rect x="1915" y="544" width="4" height="28" fill="#f2f2f2" />
<rect x="1915" y="572" width="4" height="2" fill="#1a1aff" />
<rect x="1927" y="544" width="4" height="28" fill="#f2f2f2" />
<rect x="1927" y="572" width="4" height="2" fill="#1a1aff" />
<rect x="1947" y="544" width="4" height="28" fill="#f2f2f2" />
<rect x="1947" y="572" width="4" height="2" fill="#1a1aff" />
<rect x="1959" y="544" width="4" height="28" fill="#f2f2f2" />
<rect x="1959" y="572" width="4" height="2" fill="#1a1aff" />
<rect x="1915" y="576" width="4" height="28" fill="#f2f2f2" />
<rect x="1915" y="604" width="4" height="2" fill="#1a1aff" />
<rect x="1927" y="576" width="4" height="28" fill="#f2f2f2" />
<rect x="1927" y="604" width="4" height="2" fill="#1a1aff" />
<rect x="1959" y="612" width="4" height="28" fill="#f2f2f2" />
<rect x="1959" y="640" width="4" height="2" fill="#b8b8b8" />
<rect x="1959" y="644" width="4" height="28" fill="#f2f2f2" />
<rect x="1959" y="672" width="4" height="2" fill="#b8b8b8" />
<rect x="467" y="714" width="4" height="28" fill="#f2f2f2" />
<rect x="467" y="742" width="4" height="2" fill="#f5b040" />
<rect x="1831" y="714" width="8" height="28" fill="#f2f2f2" />
<rect x="1831" y="742" width="8" height="2" fill="#a8a8a8" />
<rect x="1851" y="714" width="8" height="28" fill="#f2f2f2" />
<rect x="1851" y="742" width="8" height="2" fill="#a8a8a8" />
<rect x="1863" y="714" width="4" height="28" fill="#f2f2f2" />
<rect x="1863" y="742" width="4" height="2" fill="#a8a8a8" />
<rect x="1871" y="714" width="4" height="28" fill="#f2f2f2" />
<rect x="1871" y="742" width="4" height="2" fill="#a8a8a8" />
<rect x="1879" y="714" width="4" height="28" fill="#f2f2f2" />
<rect x="1879" y="742" width="4" height="2" fill="#a8a8a8" />
<rect x="1887" y="714" width="8" height="28" fill="#f2f2f2" />
<rect x="1887" y="742" width="8" height="2" fill="#a8a8a8" />
<rect x="1899" y="714" width="4" height="28" fill="#f2f2f2" />
<rect x="1899" y="742" width="4" height="2" fill="#a8a8a8" />
<rect x="1907" y="714" width="4" height="28" fill="#f2f2f2" />
<rect x="1907" y="742" width="4" height="2" fill="#a8a8a8" />
<rect x="1915" y="714" width="8" height="28" fill="#f2f2f2" />
<rect x="1915" y="742" width="8" height="2" fill="#a8a8a8" />
<rect x="1927" y="714" width="28" height="28" fill="#f2f2f2" />
<rect x="1927" y="742" width="28" height="2" fill="#a8a8a8" />
<rect x="1959" y="714" width="16" height="28" fill="#f2f2f2" />
<rect x="1959" y="742" width="16" height="2" fill="#a8a8a8" />
<rect x="1831" y="736" width="4" height="8" fill="#b0b0b0" />
<rect x="1927" y="731" width="8" height="13" fill="#b0b0b0" />
<rect x="1935" y="729" width="8" height="15" fill="#b0b0b0" />
<rect x="1943" y="736" width="4" height="8" fill="#b0b0b0" />
<rect x="1951" y="741" width="4" height="3" fill="#b0b0b0" />
<rect x="1971" y="742" width="4" height="2" fill="#f5b040" />
<rect x="403" y="750" width="96" height="30" fill="#f3f3f3" fill-opacity="0.85"/>
<rect x="503" y="750" width="8" height="30" fill="#f3f3f3" fill-opacity="0.85"/>
<rect x="543" y="750" width="4" height="30" fill="#f3f3f3" fill-opacity="0.85"/>
<rect x="551" y="750" width="12" height="30" fill="#f3f3f3" fill-opacity="0.85"/>
<rect x="567" y="750" width="40" height="30" fill="#f3f3f3" fill-opacity="0.85"/>
<rect x="615" y="750" width="4" height="30" fill="#f3f3f3" fill-opacity="0.85"/>
<rect x="1835" y="750" width="4" height="30" fill="#f3f3f3" fill-opacity="0.85"/>
<rect x="1971" y="750" width="16" height="30" fill="#f3f3f3" fill-opacity="0.85"/>
<defs><linearGradient id="pob" x1="0" y1="0" x2="1" y2="0"><stop offset="0" stop-color="#a8a8a8"/><stop offset="0.5" stop-color="#cfcfcf"/><stop offset="1" stop-color="#a8a8a8"/></linearGradient></defs>
<rect x="403" y="778" width="96" height="2" fill="#b4b4b4" />
<rect x="503" y="778" width="8" height="2" fill="#b4b4b4" />
<rect x="543" y="778" width="4" height="2" fill="#b4b4b4" />
<rect x="551" y="778" width="12" height="2" fill="#b4b4b4" />
<rect x="567" y="778" width="40" height="2" fill="#b4b4b4" />
<rect x="1835" y="778" width="4" height="2" fill="#b4b4b4" />
<rect x="1971" y="778" width="16" height="2" fill="#b4b4b4" />
<rect x="407" y="771" width="4" height="9" fill="url(#pob)" />
<rect x="411" y="759" width="8" height="21" fill="url(#pob)" />
<rect x="435" y="761" width="4" height="19" fill="url(#pob)" />
<rect x="439" y="754" width="4" height="26" fill="url(#pob)" />
<rect x="443" y="767" width="4" height="13" fill="url(#pob)" />
<rect x="447" y="763" width="4" height="17" fill="url(#pob)" />
<rect x="455" y="773" width="4" height="7" fill="url(#pob)" />
<rect x="459" y="750" width="8" height="30" fill="url(#pob)" />
<rect x="467" y="769" width="4" height="11" fill="url(#pob)" />
<rect x="471" y="773" width="4" height="7" fill="url(#pob)" />
<rect x="479" y="766" width="4" height="14" fill="url(#pob)" />
<rect x="483" y="754" width="4" height="26" fill="url(#pob)" />
<rect x="487" y="770" width="4" height="10" fill="url(#pob)" />
<rect x="491" y="758" width="4" height="22" fill="url(#pob)" />
<rect x="495" y="763" width="4" height="17" fill="url(#pob)" />
<rect x="503" y="770" width="4" height="10" fill="url(#pob)" />
<rect x="507" y="766" width="4" height="14" fill="url(#pob)" />
<rect x="551" y="754" width="4" height="26" fill="url(#pob)" />
<rect x="555" y="773" width="4" height="7" fill="url(#pob)" />
<rect x="567" y="776" width="4" height="4" fill="url(#pob)" />
<rect x="571" y="765" width="4" height="15" fill="url(#pob)" />
<rect x="575" y="764" width="4" height="16" fill="url(#pob)" />
<rect x="579" y="772" width="4" height="8" fill="url(#pob)" />
<rect x="583" y="768" width="4" height="12" fill="url(#pob)" />
<rect x="591" y="773" width="4" height="7" fill="url(#pob)" />
<rect x="595" y="767" width="4" height="13" fill="url(#pob)" />
<rect x="599" y="766" width="4" height="14" fill="url(#pob)" />
<rect x="603" y="776" width="4" height="4" fill="url(#pob)" />
<rect x="615" y="775" width="4" height="5" fill="url(#pob)" />
<rect x="1983" y="774" width="4" height="6" fill="url(#pob)" />
<rect x="403" y="782" width="4" height="30" fill="#f2f2f2" />
<rect x="403" y="810" width="4" height="2" fill="#a0a0a0" />
<rect x="435" y="782" width="4" height="30" fill="#f2f2f2" />
<rect x="435" y="810" width="4" height="2" fill="#a0a0a0" />
<rect x="455" y="782" width="4" height="30" fill="#f2f2f2" />
<rect x="455" y="810" width="4" height="2" fill="#a0a0a0" />
<rect x="648" y="45" width="1" height="886" fill="#bff3ff" />
</svg>
<div style="position:absolute;left:511px;top:298px;width:20px;height:25px;border:2px solid #a69676;border-radius:7px;background:linear-gradient(#fffaf0,#ffe4bc);"></div><div style="position:absolute;left:519px;top:315px;width:2.2px;height:2.3px;background:#111"></div><div style="position:absolute;left:522.7px;top:315px;width:2.2px;height:2.3px;background:#111"></div><div style="position:absolute;left:526.2px;top:315px;width:2.2px;height:2.3px;background:#111"></div>
<div style="position:absolute;box-sizing:border-box;left:611px;top:366px;width:216px;height:30px;border:2px solid #4c0044;border-radius:7px;background:linear-gradient(#880088 0%,#9a009a 40%,#a000a0 60%,#7e007e 100%);"></div>
<div style="position:absolute;left:827px;top:366px;width:6px;height:30px;background:linear-gradient(#8a008a,#a400a4 50%,#7a007a)"></div><div style="position:absolute;left:833px;top:366px;width:2px;height:30px;background:#b890b8"></div>
<div style="position:absolute;box-sizing:border-box;left:1835px;top:480px;width:108px;height:30px;border:2px solid #00009a;border-radius:7px;background:linear-gradient(#2a2aff 0%,#1414f4 50%,#0c0cd8 100%);"></div>
<div style="position:absolute;box-sizing:border-box;left:611px;top:612px;width:349px;height:30px;border:2px solid #7c7c7c;border-radius:8px;background:linear-gradient(#f2f2f2 0%,#e2e2e2 45%,#c8c8c8 100%);"></div>
<div style="position:absolute;box-sizing:border-box;left:611px;top:645px;width:349px;height:29px;border:2px solid #7c7c7c;border-radius:8px;background:linear-gradient(#f2f2f2 0%,#e2e2e2 45%,#c8c8c8 100%);"></div>
<div style="position:absolute;box-sizing:border-box;left:611px;top:677px;width:349px;height:29px;border:2px solid #7c7c7c;border-radius:8px;background:linear-gradient(#f2f2f2 0%,#e2e2e2 45%,#c8c8c8 100%);"></div>
<div style="position:absolute;box-sizing:border-box;left:611px;top:714px;width:349px;height:30px;border:2px solid #2f8f2a;border-radius:8px;background:linear-gradient(#6ede5c 0%,#5fda4e 50%,#4cc03c 100%);"></div>
<div style="position:absolute;left:775px;top:10px;width:66px;height:26px;border:2px solid #333;border-radius:6px;background:#4b4b4b"></div>
<div class="t" style="left:412.50px;top:862.50px;font-size:17.7px;color:rgba(60,60,90,0.16);letter-spacing:0.069px;">801 px; 0 msec</div>
<div class="t" style="left:614.40px;top:370.54px;font-size:16px;color:#f2dcf2;letter-spacing:0.000px;transform:scaleX(0.9811);transform-origin:0 0;">DataFrame.from_pandas [5....</div>
<div class="t" style="left:1841.80px;top:484.54px;font-size:16px;color:#e4e4ff;letter-spacing:0.000px;transform:scaleX(0.9475);transform-origin:0 0;">fit RF-Classi...</div>
<div class="t" style="left:644.40px;top:616.54px;font-size:16px;color:#333;letter-spacing:0.000px;transform:scaleX(0.9954);transform-origin:0 0;">from_arrow [5.310 s]</div>
<div class="t" style="left:615.40px;top:648.14px;font-size:16px;color:#333;letter-spacing:0.000px;">make_fixed_width_column ...</div>
<div class="t" style="left:618.50px;top:680.14px;font-size:16px;color:#333;letter-spacing:0.000px;">make_numeric_column [5....</div>
<div class="t" style="left:648.00px;top:718.24px;font-size:16px;color:#111;letter-spacing:0.000px;transform:scaleX(1.0181);transform-origin:0 0;">cudaMemsetAsync</div>
<div class="t" style="left:783.00px;top:15.30px;font-size:17.7px;color:#fff;letter-spacing:0.610px;">10.11s</div>
<svg width="2028" height="931" viewBox="0 0 2028 931" shape-rendering="crispEdges">
<line x1="809" y1="45" x2="809" y2="931" stroke="#a9a9a9" stroke-width="2" stroke-dasharray="2.7 1.8"/>
<rect x="646" y="45" width="2" height="886" fill="#1f8df5" />
<path d="M641,844 L655,844 L648,858 Z" fill="#fff" stroke="#1f8df5" stroke-width="2" shape-rendering="geometricPrecision"/>
<rect x="648" y="860" width="3" height="6" fill="#00e4f4" />
</svg>
<div style="position:absolute;left:813px;top:452px;width:642px;height:400px;border:2px solid #000;background:#ffffe1;box-shadow:3px 3px 3px rgba(0,0,0,0.35)"></div>
<div class="t" style="left:819.60px;top:457.00px;font-size:17.7px;color:#000;letter-spacing:0.069px;">Time: 10.073s</div>
<div class="t" style="left:819.60px;top:479.00px;font-size:17.7px;color:#000;letter-spacing:-0.079px;">Thread: 83</div>
<div class="t" style="left:818.60px;top:501.00px;font-size:17.7px;color:#000;letter-spacing:-0.012px;">CategoryId: 1</div>
<div class="t" style="left:818.60px;top:523.00px;font-size:17.7px;color:#000;letter-spacing:0.010px;">Category: Python Thread</div>
<div class="t" style="left:818.60px;top:545.00px;font-size:17.7px;color:#000;letter-spacing:0.238px;">PythonBacktrace</div>
<div class="t" style="left:819.60px;top:567.00px;font-size:17.7px;color:#000;letter-spacing:-0.039px;">Thread state: Running</div>
<div class="t" style="left:818.60px;top:589.00px;font-size:17.7px;color:#000;letter-spacing:0.046px;">Frames count: 6</div>
<div class="t" style="left:818.60px;top:611.00px;font-size:17.7px;color:#000;letter-spacing:-0.042px;">Frames (Function, File, Line)</div>
<div class="t" style="left:818.60px;top:633.00px;font-size:17.7px;color:#000;letter-spacing:0.474px;">0: from_arrow, /opt/conda/envs/rapids/lib/python3.9/site-packages/cudf/core/</div>
<div class="t" style="left:818.60px;top:655.00px;font-size:17.7px;color:#000;letter-spacing:0.363px;">column/column.py, 302</div>
<div class="t" style="left:818.60px;top:677.00px;font-size:17.7px;color:#000;letter-spacing:0.477px;">1: as_column, /opt/conda/envs/rapids/lib/python3.9/site-packages/cudf/core/</div>
<div class="t" style="left:818.60px;top:699.00px;font-size:17.7px;color:#000;letter-spacing:0.296px;">column/column.py, 1,792</div>
<div class="t" style="left:818.60px;top:721.00px;font-size:17.7px;color:#000;letter-spacing:0.477px;">2: as_column, /opt/conda/envs/rapids/lib/python3.9/site-packages/cudf/core/</div>
<div class="t" style="left:818.60px;top:743.00px;font-size:17.7px;color:#000;letter-spacing:0.296px;">column/column.py, 2,010</div>
<div class="t" style="left:818.60px;top:765.00px;font-size:17.7px;color:#000;letter-spacing:0.449px;">3: from_pandas, /opt/conda/envs/rapids/lib/python3.9/site-packages/cudf/</div>
<div class="t" style="left:818.60px;top:787.00px;font-size:17.7px;color:#000;letter-spacing:0.196px;">core/dataframe.py, 5,089</div>
<div class="t" style="left:819.60px;top:809.00px;font-size:17.7px;color:#000;letter-spacing:0.387px;">4: inner, /opt/conda/envs/rapids/lib/python3.9/contextlib.py, 79</div>
<div class="t" style="left:818.60px;top:831.00px;font-size:17.7px;color:#000;letter-spacing:0.280px;">5: , /rapids/notebooks/host/random_forest_demo.py, 40</div>
</div></body></html>
